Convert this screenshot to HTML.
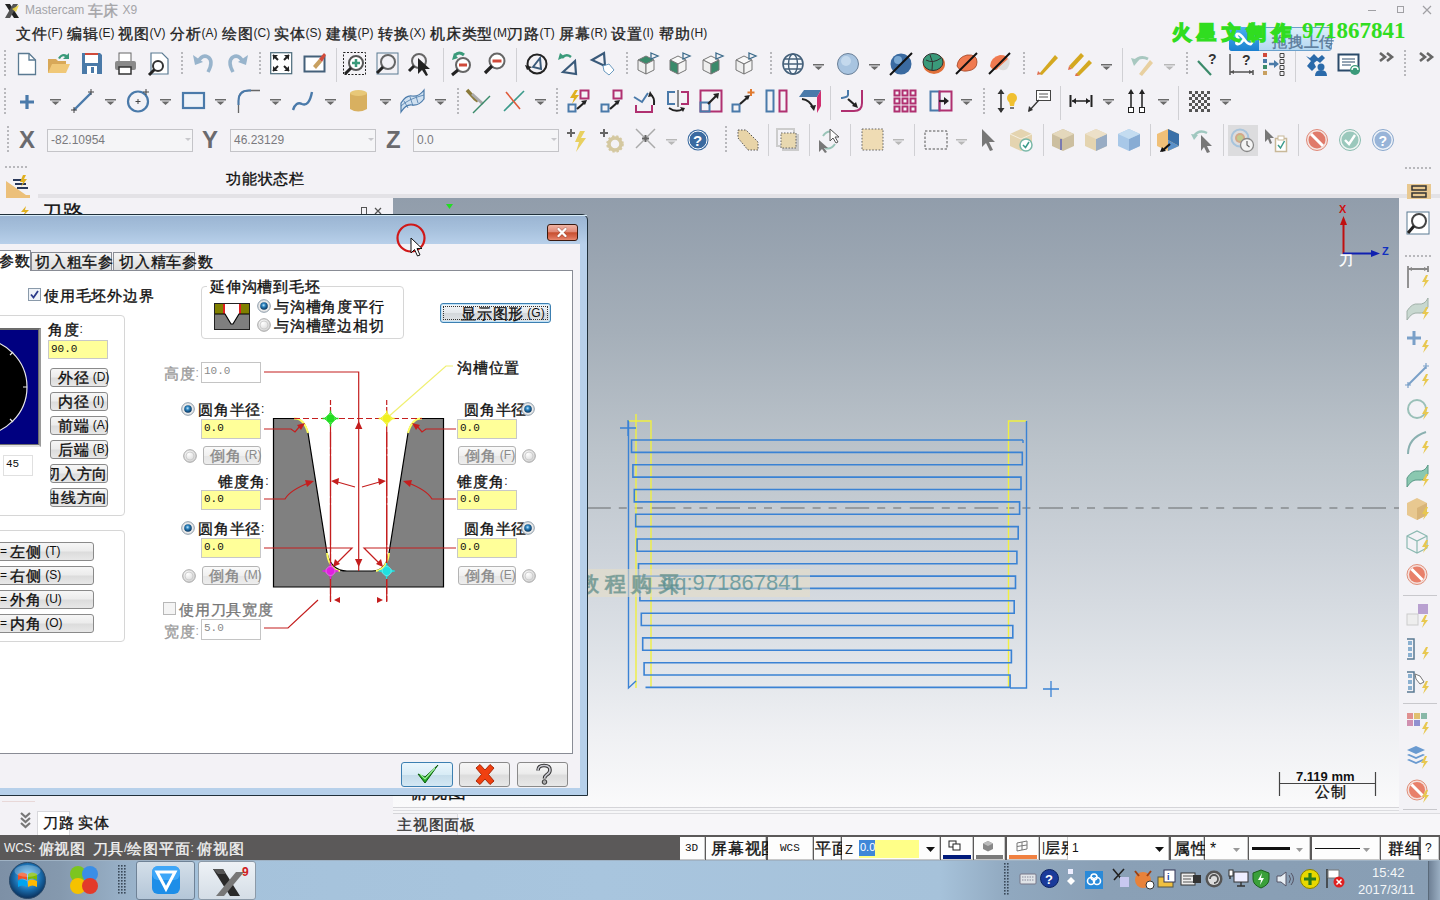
<!DOCTYPE html>
<html><head><meta charset="utf-8">
<style>
*{margin:0;padding:0;box-sizing:border-box}
html,body{width:1440px;height:900px;overflow:hidden;background:#f3f2f6;font-family:"Liberation Sans",sans-serif;font-size:12px;color:#111}
body{position:relative}
.a{position:absolute}
.t{position:absolute;white-space:nowrap;line-height:1}
i.c{font-style:normal;font-family:"Liberation Sans",sans-serif;font-weight:normal;font-size:1.25em;letter-spacing:.05em;line-height:0;-webkit-text-stroke:.35px currentColor;vertical-align:-2px}
svg{position:absolute;overflow:visible}
.btn{position:absolute;border:1px solid #8a8a8a;border-radius:3px;background:linear-gradient(#f6f6f6 0%,#ececec 45%,#dcdcdc 55%,#e8e8e8 100%)}
.inp{position:absolute;border:1px solid #bdbdbd;background:#ffff99}
.rad{position:absolute;width:13px;height:13px;border-radius:50%;border:1px solid #9aa;background:radial-gradient(circle at 50% 45%,#fff 0,#eee 40%,#ccc 100%)}
.radon{background:radial-gradient(circle at 45% 40%,#9fd8ff 0,#2a7fb8 35%,#0d3d66 60%,#ddd 62%,#bbb 100%)}
</style></head><body>
<svg style="left:3px;top:3px;" width="18" height="16" viewBox="0 0 18 16"><path d="M2 1 L7 1 L16 15 L11 15 Z" fill="#222"/><path d="M15 1 L10 1 L2 15 L7 15 Z" fill="#555"/><path d="M9 6 L16 2 L13 9 Z" fill="#e8d040" opacity=".9"/></svg>
<div class="t" style="left:25px;top:4px;font-size:12px;color:#a4a4a8;">Mastercam <i class="c">车床</i> X9</div>
<div class="a" style="left:1368px;top:10px;width:8px;height:1px;background:#a0a0a4"></div>
<div class="a" style="left:1397px;top:6px;width:7px;height:7px;border:1px solid #a0a0a4"></div>
<svg style="left:1422px;top:5px;" width="10" height="10" viewBox="0 0 10 10"><path d="M1 1L9 9M9 1L1 9" stroke="#a0a0a4" stroke-width="1.2"/></svg>
<div class="t" style="left:16px;top:27px;font-size:12px;color:#222;"><i class="c">文件</i>(F)</div>
<div class="t" style="left:67px;top:27px;font-size:12px;color:#222;"><i class="c">编辑</i>(E)</div>
<div class="t" style="left:118px;top:27px;font-size:12px;color:#222;"><i class="c">视图</i>(V)</div>
<div class="t" style="left:170px;top:27px;font-size:12px;color:#222;"><i class="c">分析</i>(A)</div>
<div class="t" style="left:222px;top:27px;font-size:12px;color:#222;"><i class="c">绘图</i>(C)</div>
<div class="t" style="left:274px;top:27px;font-size:12px;color:#222;"><i class="c">实体</i>(S)</div>
<div class="t" style="left:326px;top:27px;font-size:12px;color:#222;"><i class="c">建模</i>(P)</div>
<div class="t" style="left:378px;top:27px;font-size:12px;color:#222;"><i class="c">转换</i>(X)</div>
<div class="t" style="left:430px;top:27px;font-size:12px;color:#222;"><i class="c">机床类型</i>(M)</div>
<div class="t" style="left:508px;top:27px;font-size:12px;color:#222;"><i class="c">刀路</i>(T)</div>
<div class="t" style="left:559px;top:27px;font-size:12px;color:#222;"><i class="c">屏幕</i>(R)</div>
<div class="t" style="left:611px;top:27px;font-size:12px;color:#222;"><i class="c">设置</i>(I)</div>
<div class="t" style="left:659px;top:27px;font-size:12px;color:#222;"><i class="c">帮助</i>(H)</div>
<div class="t" style="left:19px;top:128px;font-size:24px;color:#6a6a6e;font-weight:bold">X</div>
<div class="a" style="left:47px;top:129px;width:146px;height:23px;border:1px solid #c4c4c8;background:#f5f5f7"></div>
<div class="t" style="left:51px;top:134px;font-size:12px;color:#7a7a7e;">-82.10954</div>
<div class="t" style="left:202px;top:128px;font-size:24px;color:#6a6a6e;font-weight:bold">Y</div>
<div class="a" style="left:230px;top:129px;width:146px;height:23px;border:1px solid #c4c4c8;background:#f5f5f7"></div>
<div class="t" style="left:234px;top:134px;font-size:12px;color:#7a7a7e;">46.23129</div>
<div class="t" style="left:386px;top:128px;font-size:24px;color:#6a6a6e;font-weight:bold">Z</div>
<div class="a" style="left:413px;top:129px;width:146px;height:23px;border:1px solid #c4c4c8;background:#f5f5f7"></div>
<div class="t" style="left:417px;top:134px;font-size:12px;color:#7a7a7e;">0.0</div>
<svg style="left:185px;top:138px;" width="6" height="4" viewBox="0 0 6 4"><path d="M0 0H6L3 3Z" fill="#c8c8cc"/></svg>
<svg style="left:368px;top:138px;" width="6" height="4" viewBox="0 0 6 4"><path d="M0 0H6L3 3Z" fill="#c8c8cc"/></svg>
<svg style="left:551px;top:138px;" width="6" height="4" viewBox="0 0 6 4"><path d="M0 0H6L3 3Z" fill="#c8c8cc"/></svg>
<div class="t" style="left:226px;top:172px;font-size:12px;color:#111;"><i class="c">功能状态栏</i></div>
<div class="a" style="left:38px;top:194px;width:1402px;height:4px;background:#e3e2e6"></div>
<div class="t" style="left:42px;top:204px;font-size:16px;color:#111;"><i class="c">刀路</i></div>
<svg style="left:20px;top:206px;" width="10" height="10" viewBox="0 0 10 10"><path d="M6 0L1 6H5L3 10L9 4H5Z" fill="#e0b020"/></svg>
<div class="a" style="left:361px;top:207px;width:6px;height:7px;border:1.5px solid #555;border-bottom:none"></div>
<svg style="left:374px;top:207px;" width="8" height="7" viewBox="0 0 8 7"><path d="M1 1L7 7M7 1L1 7" stroke="#555" stroke-width="1.3"/></svg>
<div class="a" style="left:393px;top:198px;width:1006px;height:609px;background:linear-gradient(#919dab 0%,#a5afb9 22%,#bcc4cb 42%,#ccd2d9 58%,#dfe3e8 75%,#eff0f3 88%,#fafafb 100%)"></div>
<div class="a" style="left:393px;top:807px;width:1006px;height:7px;background:#f6f6f8;border-top:1px solid #d4d4d8;border-bottom:1px solid #d4d4d8"></div>
<div class="a" style="left:393px;top:810px;width:1006px;height:1px;background:#dcdce0"></div>
<div class="a" style="left:1399px;top:198px;width:41px;height:637px;background:#f3f2f6"></div>
<div class="a" style="left:393px;top:814px;width:1047px;height:21px;background:#f3f2f6"></div>
<div class="a" style="left:457px;top:813px;width:983px;height:22px;background:#f7f6f9;border:1px solid #dcdce0;border-bottom:none;border-right:none"></div>
<div class="t" style="left:397px;top:818px;font-size:12px;color:#333;"><i class="c">主视图面板</i></div>
<div class="a" style="left:0px;top:798px;width:393px;height:37px;background:#f3f2f6"></div>
<div class="a" style="left:2px;top:801px;width:33px;height:1px;background:#e8d8d8"></div>
<div class="a" style="left:37px;top:811px;width:33px;height:24px;background:#fff;border:1px solid #d8d8dc;border-bottom:none"></div>
<div class="t" style="left:43px;top:816px;font-size:12px;color:#111;"><i class="c">刀路</i></div>
<div class="t" style="left:78px;top:816px;font-size:12px;color:#111;"><i class="c">实体</i></div>
<svg style="left:20px;top:812px;" width="11" height="20" viewBox="0 0 11 20"><path d="M1 1L5.5 5L10 1M1 6L5.5 10L10 6M1 11L5.5 15L10 11" stroke="#777" stroke-width="2.2" fill="none"/></svg>
<div class="a" style="left:0px;top:835px;width:1440px;height:25px;background:#5b5959"></div>
<div class="t" style="left:4px;top:842px;font-size:12px;color:#f2f2f2;">WCS: <i class="c">俯视图</i> &nbsp;<i class="c">刀具</i>/<i class="c">绘图平面</i>: <i class="c">俯视图</i></div>
<div class="a" style="left:680px;top:837px;width:25px;height:23px;background:#fdfdfd;border-right:1px solid #c8c8c8;border-bottom:1px solid #c8c8c8"></div>
<div class="t" style="left:685px;top:843px;font-size:11px;color:#111;font-family:'Liberation Mono'">3D</div>
<div class="a" style="left:706px;top:837px;width:60px;height:23px;background:#fdfdfd;border-right:1px solid #c8c8c8;border-bottom:1px solid #c8c8c8"></div>
<div class="t" style="left:711px;top:841px;font-size:13px;color:#111;"><i class="c">屏幕视图</i></div>
<div class="a" style="left:768px;top:837px;width:45px;height:23px;background:#fdfdfd;border-right:1px solid #c8c8c8;border-bottom:1px solid #c8c8c8"></div>
<div class="t" style="left:780px;top:843px;font-size:11px;color:#111;font-family:'Liberation Mono'">WCS</div>
<div class="a" style="left:814px;top:837px;width:27px;height:23px;background:#fdfdfd;border-right:1px solid #c8c8c8;border-bottom:1px solid #c8c8c8"></div>
<div class="t" style="left:815px;top:841px;font-size:13px;color:#111;"><i class="c">平面</i></div>
<div class="a" style="left:842px;top:837px;width:98px;height:23px;background:#fdfdfd;border-right:1px solid #c8c8c8;border-bottom:1px solid #c8c8c8"></div>
<div class="t" style="left:845px;top:843px;font-size:13px;color:#222;">Z</div>
<div class="a" style="left:859px;top:840px;width:60px;height:18px;background:#ffff88"></div>
<div class="a" style="left:859px;top:840px;width:16px;height:16px;background:#3f87d8"></div>
<div class="t" style="left:860px;top:842px;font-size:11px;color:#fff;">0.0</div>
<svg style="left:926px;top:847px;" width="9" height="5" viewBox="0 0 9 5"><path d="M0 0H9L4.5 5Z" fill="#111"/></svg>
<div class="a" style="left:941px;top:837px;width:32px;height:23px;background:#fdfdfd;border-right:1px solid #c8c8c8;border-bottom:1px solid #c8c8c8"></div>
<div class="a" style="left:943px;top:855px;width:28px;height:4px;background:#001a7a"></div>
<svg style="left:948px;top:840px;" width="14" height="12" viewBox="0 0 14 12"><rect x="1" y="1" width="7" height="6" fill="none" stroke="#222"/><rect x="5" y="4" width="7" height="6" fill="#fff" stroke="#222"/></svg>
<div class="a" style="left:974px;top:837px;width:31px;height:23px;background:#fdfdfd;border-right:1px solid #c8c8c8;border-bottom:1px solid #c8c8c8"></div>
<div class="a" style="left:976px;top:855px;width:27px;height:4px;background:#7a7a7a"></div>
<svg style="left:982px;top:840px;" width="12" height="12" viewBox="0 0 12 12"><path d="M6 1L11 3.5V9L6 11.5L1 9V3.5Z" fill="#888"/><path d="M6 1L11 3.5L6 6L1 3.5Z" fill="#bbb"/></svg>
<div class="a" style="left:1007px;top:837px;width:32px;height:23px;background:#fdfdfd;border-right:1px solid #c8c8c8;border-bottom:1px solid #c8c8c8"></div>
<div class="a" style="left:1009px;top:855px;width:28px;height:4px;background:#f08040"></div>
<svg style="left:1016px;top:840px;" width="12" height="12" viewBox="0 0 12 12"><path d="M1 3L11 1V9L1 11Z" fill="none" stroke="#777"/><path d="M6 2V10M1 6.5L11 5" stroke="#777"/></svg>
<div class="a" style="left:1040px;top:837px;width:28px;height:23px;background:#fdfdfd;border-right:1px solid #c8c8c8;border-bottom:1px solid #c8c8c8"></div>
<div class="t" style="left:1042px;top:841px;font-size:12px;color:#111;">|<i class="c">层别</i></div>
<div class="a" style="left:1068px;top:837px;width:101px;height:23px;background:#fff;border-right:1px solid #c8c8c8"></div>
<div class="t" style="left:1072px;top:842px;font-size:12px;color:#111;">1</div>
<svg style="left:1155px;top:847px;" width="9" height="5" viewBox="0 0 9 5"><path d="M0 0H9L4.5 5Z" fill="#111"/></svg>
<div class="a" style="left:1171px;top:837px;width:33px;height:23px;background:#fdfdfd;border-right:1px solid #c8c8c8;border-bottom:1px solid #c8c8c8"></div>
<div class="t" style="left:1174px;top:841px;font-size:13px;color:#111;"><i class="c">属性</i></div>
<div class="a" style="left:1205px;top:837px;width:43px;height:23px;background:#fdfdfd;border-right:1px solid #c8c8c8;border-bottom:1px solid #c8c8c8"></div>
<div class="t" style="left:1210px;top:841px;font-size:16px;color:#111;">*</div>
<svg style="left:1233px;top:848px;" width="7" height="4" viewBox="0 0 7 4"><path d="M0 0H7L3.5 4Z" fill="#999"/></svg>
<div class="a" style="left:1249px;top:837px;width:61px;height:23px;background:#fdfdfd;border-right:1px solid #c8c8c8;border-bottom:1px solid #c8c8c8"></div>
<div class="a" style="left:1252px;top:847px;width:38px;height:3px;background:#111"></div>
<svg style="left:1296px;top:848px;" width="7" height="4" viewBox="0 0 7 4"><path d="M0 0H7L3.5 4Z" fill="#999"/></svg>
<div class="a" style="left:1312px;top:837px;width:68px;height:23px;background:#fdfdfd;border-right:1px solid #c8c8c8;border-bottom:1px solid #c8c8c8"></div>
<div class="a" style="left:1315px;top:848px;width:45px;height:1px;background:#111"></div>
<svg style="left:1363px;top:848px;" width="7" height="4" viewBox="0 0 7 4"><path d="M0 0H7L3.5 4Z" fill="#999"/></svg>
<div class="a" style="left:1381px;top:837px;width:38px;height:23px;background:#fdfdfd;border-right:1px solid #c8c8c8;border-bottom:1px solid #c8c8c8"></div>
<div class="t" style="left:1388px;top:841px;font-size:13px;color:#111;"><i class="c">群组</i></div>
<div class="a" style="left:1421px;top:837px;width:18px;height:23px;background:#fdfdfd;border-right:1px solid #c8c8c8;border-bottom:1px solid #c8c8c8"></div>
<div class="t" style="left:1425px;top:842px;font-size:12px;color:#111;">?</div>
<svg style="left:4px;top:50px;" width="2" height="26" viewBox="0 0 2 26"><rect x="0" y="0" width="2" height="2" fill="#b8b8bc"/><rect x="0" y="4" width="2" height="2" fill="#b8b8bc"/><rect x="0" y="8" width="2" height="2" fill="#b8b8bc"/><rect x="0" y="12" width="2" height="2" fill="#b8b8bc"/><rect x="0" y="16" width="2" height="2" fill="#b8b8bc"/><rect x="0" y="20" width="2" height="2" fill="#b8b8bc"/><rect x="0" y="24" width="2" height="2" fill="#b8b8bc"/></svg>
<svg style="left:17px;top:52px;" width="24" height="24" viewBox="0 0 24 24"><path d="M1.5 1.5H12L18.5 8V22.5H1.5Z" fill="#fff" stroke="#5a7a92" stroke-width="1.3"/><path d="M12 1.5V8H18.5" fill="none" stroke="#5a7a92" stroke-width="1.3"/></svg>
<svg style="left:47px;top:52px;" width="24" height="24" viewBox="0 0 24 24"><path d="M1 7H9L11 9H19V21H1Z" fill="#d8a858"/><path d="M1 21L5 12H23L19 21Z" fill="#f0c878"/><path d="M11 6Q15 0 20 3L22 1V7H16L18 5Q15 3 13 7Z" fill="#3a9a7a"/></svg>
<svg style="left:81px;top:52px;" width="24" height="24" viewBox="0 0 24 24"><path d="M1 1H19L21 3V22H1Z" fill="#4a7aa8"/><rect x="4" y="2" width="13" height="9" fill="#fff"/><rect x="4" y="1" width="13" height="2" fill="#d04a3a"/><rect x="6" y="14" width="10" height="8" fill="#fff"/><rect x="10" y="15" width="3" height="6" fill="#4a7aa8"/></svg>
<svg style="left:114px;top:52px;" width="24" height="24" viewBox="0 0 24 24"><rect x="5" y="1" width="12" height="9" fill="#fff" stroke="#666"/><rect x="1" y="9" width="21" height="9" rx="2" fill="#8a8a8a"/><rect x="5" y="15" width="12" height="7" fill="#fff" stroke="#333" stroke-width="1.5"/></svg>
<svg style="left:147px;top:52px;" width="24" height="24" viewBox="0 0 24 24"><path d="M4 1H15L21 7V22H4Z" fill="#fff" stroke="#5a7a92" stroke-width="1.2"/><circle cx="11" cy="14" r="5" fill="none" stroke="#333" stroke-width="2"/><path d="M7.5 17.5L2 23" stroke="#222" stroke-width="3"/></svg>
<svg style="left:181px;top:52px;" width="2" height="24" viewBox="0 0 2 24"><rect x="0" y="0" width="2" height="2" fill="#b8b8bc"/><rect x="0" y="4" width="2" height="2" fill="#b8b8bc"/><rect x="0" y="8" width="2" height="2" fill="#b8b8bc"/><rect x="0" y="12" width="2" height="2" fill="#b8b8bc"/><rect x="0" y="16" width="2" height="2" fill="#b8b8bc"/><rect x="0" y="20" width="2" height="2" fill="#b8b8bc"/></svg>
<svg style="left:192px;top:52px;" width="24" height="24" viewBox="0 0 24 24"><path d="M6 10Q10 2 16 5Q22 9 16 20" fill="none" stroke="#98b4cc" stroke-width="3.5"/><path d="M1 3L3 13L11 10Z" fill="#98b4cc"/></svg>
<svg style="left:225px;top:52px;" width="24" height="24" viewBox="0 0 24 24"><path d="M18 10Q14 2 8 5Q2 9 8 20" fill="none" stroke="#98b4cc" stroke-width="3.5"/><path d="M23 3L21 13L13 10Z" fill="#98b4cc"/></svg>
<svg style="left:259px;top:52px;" width="2" height="24" viewBox="0 0 2 24"><rect x="0" y="0" width="2" height="2" fill="#b8b8bc"/><rect x="0" y="4" width="2" height="2" fill="#b8b8bc"/><rect x="0" y="8" width="2" height="2" fill="#b8b8bc"/><rect x="0" y="12" width="2" height="2" fill="#b8b8bc"/><rect x="0" y="16" width="2" height="2" fill="#b8b8bc"/><rect x="0" y="20" width="2" height="2" fill="#b8b8bc"/></svg>
<svg style="left:270px;top:52px;" width="24" height="24" viewBox="0 0 24 24"><rect x=".7" y=".7" width="21" height="21" fill="#fff" stroke="#4a6a7a" stroke-width="1.2"/><path d="M3 3L8 8M19 3L14 8M3 19L8 14M19 19L14 14" stroke="#222" stroke-width="2"/><path d="M3 3H8L3 8Z M19 3H14L19 8Z M3 19H8L3 14Z M19 19H14L19 14Z" fill="#222"/></svg>
<svg style="left:303px;top:52px;" width="24" height="24" viewBox="0 0 24 24"><rect x="1.5" y="4.5" width="20" height="15" fill="#fff" stroke="#44607a" stroke-width="2"/><path d="M10 14L16 7L19 10L13 17Z" fill="#c8a060"/><path d="M16 7L21 1L23 3L19 10Z" fill="#d04a3a"/></svg>
<div class="a" style="left:336px;top:48px;width:1px;height:34px;background:#d0d0d4"></div>
<svg style="left:343px;top:52px;" width="24" height="24" viewBox="0 0 24 24"><rect x=".5" y=".5" width="22" height="22" fill="none" stroke="#222" stroke-dasharray="2 1.5"/><circle cx="13" cy="11" r="7" fill="#fff" stroke="#555" stroke-width="2"/><path d="M13 7V15M9 11H17" stroke="#3a9a7a" stroke-width="2.5"/><path d="M8 16L2 22" stroke="#222" stroke-width="3"/></svg>
<svg style="left:376px;top:52px;" width="24" height="24" viewBox="0 0 24 24"><rect x="1" y="1" width="21" height="21" fill="none" stroke="#5a7a92"/><circle cx="12" cy="10" r="7" fill="none" stroke="#666" stroke-width="2"/><path d="M7 15L1 21" stroke="#222" stroke-width="3"/></svg>
<svg style="left:408px;top:52px;" width="24" height="24" viewBox="0 0 24 24"><circle cx="11" cy="9" r="7" fill="none" stroke="#666" stroke-width="2"/><path d="M6 14L1 19" stroke="#222" stroke-width="3"/><path d="M10 6L10 22L14 18L18 24L20 23L17 17H22Z" fill="#222"/></svg>
<div class="a" style="left:443px;top:48px;width:1px;height:34px;background:#d0d0d4"></div>
<svg style="left:450px;top:52px;" width="24" height="24" viewBox="0 0 24 24"><path d="M5 3Q9 -1 14 3" stroke="#3a9a7a" stroke-width="3" fill="none"/><path d="M2 8L4 1L8 6Z" fill="#3a9a7a"/><circle cx="13" cy="13" r="7" fill="#fff" stroke="#666" stroke-width="2"/><path d="M9 13H17" stroke="#d04a3a" stroke-width="3"/><path d="M8 18L2 23" stroke="#222" stroke-width="3"/></svg>
<svg style="left:483px;top:52px;" width="24" height="24" viewBox="0 0 24 24"><circle cx="14" cy="9" r="7.5" fill="#fff" stroke="#666" stroke-width="2"/><path d="M9.5 9H18.5" stroke="#d04a3a" stroke-width="3"/><path d="M9 14L2 21" stroke="#222" stroke-width="3.2"/></svg>
<div class="a" style="left:516px;top:48px;width:1px;height:34px;background:#d0d0d4"></div>
<svg style="left:525px;top:52px;" width="24" height="24" viewBox="0 0 24 24"><circle cx="12" cy="12" r="9.5" fill="none" stroke="#222" stroke-width="2"/><path d="M2 18L0 13L7 15Z" fill="#222"/><path d="M8 15L15 6L16 17Z" fill="none" stroke="#3a5a7a" stroke-width="2"/></svg>
<svg style="left:557px;top:52px;" width="24" height="24" viewBox="0 0 24 24"><path d="M5 6Q9 1 14 5" stroke="#3a9a7a" stroke-width="2.5" fill="none"/><path d="M1 8L3 1L8 5Z" fill="#3a9a7a"/><path d="M6 20L18 9L19 22Z" fill="none" stroke="#3a5a7a" stroke-width="2.2"/></svg>
<svg style="left:590px;top:52px;" width="24" height="24" viewBox="0 0 24 24"><path d="M2 8L14 1L15 14Z" fill="none" stroke="#3a5a7a" stroke-width="2.2"/><path d="M13 14L19 12L24 18L19 23L14 19Z" fill="#fff" stroke="#6a9ac0"/></svg>
<svg style="left:626px;top:52px;" width="2" height="24" viewBox="0 0 2 24"><rect x="0" y="0" width="2" height="2" fill="#b8b8bc"/><rect x="0" y="4" width="2" height="2" fill="#b8b8bc"/><rect x="0" y="8" width="2" height="2" fill="#b8b8bc"/><rect x="0" y="12" width="2" height="2" fill="#b8b8bc"/><rect x="0" y="16" width="2" height="2" fill="#b8b8bc"/><rect x="0" y="20" width="2" height="2" fill="#b8b8bc"/></svg>
<svg style="left:636px;top:52px;" width="24" height="24" viewBox="0 0 24 24"><path d="M2 8L10 4L18 8L10 12Z" fill="#3a8a6a" stroke="#777"/><path d="M2 8V18L10 22V12Z" fill="#eee" stroke="#777"/><path d="M18 8V18L10 22V12Z" fill="#f4f4f4" stroke="#777"/><path d="M15 1L22 4L15 7Z" fill="none" stroke="#3a6a8a" stroke-width="1.3"/></svg>
<svg style="left:668px;top:52px;" width="24" height="24" viewBox="0 0 24 24"><path d="M2 8L10 4L18 8L10 12Z" fill="#f8f8f8" stroke="#777"/><path d="M2 8V18L10 22V12Z" fill="#3a8a6a" stroke="#777"/><path d="M18 8V18L10 22V12Z" fill="#f4f4f4" stroke="#777"/><path d="M15 1L22 4L15 7Z" fill="none" stroke="#3a6a8a" stroke-width="1.3"/></svg>
<svg style="left:701px;top:52px;" width="24" height="24" viewBox="0 0 24 24"><path d="M2 8L10 4L18 8L10 12Z" fill="#f8f8f8" stroke="#777"/><path d="M2 8V18L10 22V12Z" fill="#eee" stroke="#777"/><path d="M18 8V18L10 22V12Z" fill="#3a8a6a" stroke="#777"/><path d="M15 1L22 4L15 7Z" fill="none" stroke="#3a6a8a" stroke-width="1.3"/></svg>
<svg style="left:734px;top:52px;" width="24" height="24" viewBox="0 0 24 24"><path d="M2 8L10 4L18 8L10 12Z" fill="#f8f8f8" stroke="#777"/><path d="M2 8V18L10 22V12Z" fill="#eee" stroke="#777"/><path d="M18 8V18L10 22V12Z" fill="#f4f4f4" stroke="#777"/><path d="M15 1L22 4L15 7Z" fill="none" stroke="#3a6a8a" stroke-width="1.3"/></svg>
<svg style="left:770px;top:52px;" width="2" height="24" viewBox="0 0 2 24"><rect x="0" y="0" width="2" height="2" fill="#b8b8bc"/><rect x="0" y="4" width="2" height="2" fill="#b8b8bc"/><rect x="0" y="8" width="2" height="2" fill="#b8b8bc"/><rect x="0" y="12" width="2" height="2" fill="#b8b8bc"/><rect x="0" y="16" width="2" height="2" fill="#b8b8bc"/><rect x="0" y="20" width="2" height="2" fill="#b8b8bc"/></svg>
<svg style="left:782px;top:52px;" width="24" height="24" viewBox="0 0 24 24"><circle cx="11" cy="12" r="10" fill="#f4f8fc" stroke="#44607a" stroke-width="1.6"/><ellipse cx="11" cy="12" rx="4.5" ry="10" fill="none" stroke="#44607a" stroke-width="1.4"/><path d="M1 12H21M3 7H19M3 17H19" stroke="#44607a" stroke-width="1.3"/></svg>
<svg style="left:813px;top:64px;" width="11" height="6" viewBox="0 0 11 6"><path d="M0 0H11V1.5H0Z M1.5 2.5H9.5L5.5 6Z" fill="#6a6a6a"/></svg>
<svg style="left:837px;top:52px;" width="24" height="24" viewBox="0 0 24 24"><circle cx="11" cy="12" r="10.5" fill="#a8c4e0" stroke="#6a8098"/><circle cx="9" cy="9" r="5" fill="#d0e2f2" opacity=".7"/></svg>
<svg style="left:869px;top:64px;" width="11" height="6" viewBox="0 0 11 6"><path d="M0 0H11V1.5H0Z M1.5 2.5H9.5L5.5 6Z" fill="#6a6a6a"/></svg>
<svg style="left:889px;top:52px;" width="24" height="24" viewBox="0 0 24 24"><circle cx="12" cy="12" r="10.5" fill="#3a6aa0"/><circle cx="9" cy="8" r="4" fill="#8ab8e0" opacity=".8"/><path d="M1 23L23 1" stroke="#111" stroke-width="2"/></svg>
<svg style="left:922px;top:52px;" width="24" height="24" viewBox="0 0 24 24"><ellipse cx="12" cy="12" rx="11" ry="10" fill="#e0703a"/><ellipse cx="11" cy="10" rx="10" ry="8.5" fill="#3a9a7a" stroke="#333"/><path d="M4 8Q11 12 19 6M8 3Q12 10 10 18" stroke="#333" fill="none"/></svg>
<svg style="left:955px;top:52px;" width="24" height="24" viewBox="0 0 24 24"><path d="M2 14Q3 5 12 3Q22 2 22 10Q22 18 12 19Q5 20 2 14Z" fill="#f07a50" stroke="#a04020" stroke-width=".8"/><path d="M1 22L22 1" stroke="#111" stroke-width="2"/></svg>
<svg style="left:988px;top:52px;" width="24" height="24" viewBox="0 0 24 24"><path d="M2 14Q3 5 12 3Q20 3 20 8L8 18Q4 18 2 14Z" fill="#f07a50"/><path d="M10 16L21 6Q23 12 19 17Q14 20 10 16Z" fill="#ddd"/><path d="M1 22L22 1" stroke="#111" stroke-width="2"/></svg>
<svg style="left:1023px;top:52px;" width="2" height="24" viewBox="0 0 2 24"><rect x="0" y="0" width="2" height="2" fill="#b8b8bc"/><rect x="0" y="4" width="2" height="2" fill="#b8b8bc"/><rect x="0" y="8" width="2" height="2" fill="#b8b8bc"/><rect x="0" y="12" width="2" height="2" fill="#b8b8bc"/><rect x="0" y="16" width="2" height="2" fill="#b8b8bc"/><rect x="0" y="20" width="2" height="2" fill="#b8b8bc"/></svg>
<svg style="left:1035px;top:52px;" width="24" height="24" viewBox="0 0 24 24"><path d="M4 22L20 3L23 6L7 23Z" fill="#d4a820"/><path d="M3 19L6 22L2 23Z" fill="#e07050"/></svg>
<svg style="left:1068px;top:52px;" width="24" height="24" viewBox="0 0 24 24"><path d="M1 14L13 1L16 4L4 17Z" fill="#d4a820"/><path d="M1 14L4 17L0 18Z" fill="#e07050"/><path d="M8 22L21 8L24 11L11 24Z" fill="#d4a820"/><path d="M8 21L11 24L7 24Z" fill="#e07050"/></svg>
<svg style="left:1101px;top:64px;" width="11" height="6" viewBox="0 0 11 6"><path d="M0 0H11V1.5H0Z M1.5 2.5H9.5L5.5 6Z" fill="#6a6a6a"/></svg>
<div class="a" style="left:1122px;top:48px;width:1px;height:34px;background:#d0d0d4"></div>
<svg style="left:1130px;top:52px;" width="24" height="24" viewBox="0 0 24 24"><path d="M4 10Q10 3 18 7" stroke="#a8c8c0" stroke-width="3" fill="none"/><path d="M1 6L4 14L9 8Z" fill="#a8c8c0"/><path d="M9 22L20 8L23 11L12 24Z" fill="#e8d0a0"/></svg>
<svg style="left:1164px;top:64px;" width="11" height="6" viewBox="0 0 11 6"><path d="M0 0H11V1.5H0Z M1.5 2.5H9.5L5.5 6Z" fill="#b8b8b8"/></svg>
<svg style="left:1186px;top:52px;" width="2" height="24" viewBox="0 0 2 24"><rect x="0" y="0" width="2" height="2" fill="#b8b8bc"/><rect x="0" y="4" width="2" height="2" fill="#b8b8bc"/><rect x="0" y="8" width="2" height="2" fill="#b8b8bc"/><rect x="0" y="12" width="2" height="2" fill="#b8b8bc"/><rect x="0" y="16" width="2" height="2" fill="#b8b8bc"/><rect x="0" y="20" width="2" height="2" fill="#b8b8bc"/></svg>
<svg style="left:1196px;top:52px;" width="24" height="24" viewBox="0 0 24 24"><path d="M2 9L15 23" stroke="#3a8a6a" stroke-width="2.2"/><text x="12" y="12" font-size="14" font-weight="bold" fill="#333" font-family="Liberation Sans">?</text></svg>
<svg style="left:1229px;top:52px;" width="24" height="24" viewBox="0 0 24 24"><path d="M1 2V23M24 18V23M1 20H24" stroke="#555" stroke-width="1.5"/><path d="M1 20L5 18V22Z M24 20L20 18V22Z" fill="#555"/><text x="13" y="13" font-size="14" font-weight="bold" fill="#333" font-family="Liberation Sans">?</text></svg>
<svg style="left:1262px;top:52px;" width="24" height="24" viewBox="0 0 24 24"><rect x="1" y="1" width="4" height="4" fill="#d04a3a"/><rect x="1" y="7" width="4" height="4" fill="#4a7aa8"/><rect x="1" y="13" width="4" height="4" fill="#3a8a6a"/><rect x="1" y="19" width="4" height="4" fill="#c8a060"/><path d="M7 12H14" stroke="#4a7aa8" stroke-width="2.5"/><path d="M17 12L12 8V16Z" fill="#4a7aa8"/><path d="M18 1.5h4v4h-4zM18 7.5h4v4h-4zM18 13.5h4v4h-4zM18 19.5h4v4h-4z" fill="none" stroke="#444"/></svg>
<div class="a" style="left:1295px;top:48px;width:1px;height:34px;background:#d0d0d4"></div>
<svg style="left:1303px;top:52px;" width="24" height="24" viewBox="0 0 24 24"><path d="M3 4L8 9L4 14L9 19L13 15L11 11L16 7L11 2L7 6Z" fill="#2a6aaa"/><path d="M13 8L19 3L22 6L17 11Z" fill="#2a6aaa"/><circle cx="18" cy="15" r="3.5" fill="#2a6aaa"/><path d="M12 24Q12 18 18 18Q24 18 24 24Z" fill="#2a6aaa"/></svg>
<svg style="left:1337px;top:52px;" width="24" height="24" viewBox="0 0 24 24"><rect x="1.5" y="2.5" width="20" height="16" fill="#fff" stroke="#2a4a6a" stroke-width="2"/><path d="M5 7H18M5 10H18M5 13H14" stroke="#2a4a6a"/><circle cx="18" cy="18" r="5" fill="#3a9a7a"/><path d="M15 18A3 3 0 0 1 21 18" stroke="#fff" stroke-width="1.3" fill="none"/></svg>
<svg style="left:1379px;top:52px;" width="16" height="12" viewBox="0 0 16 12"><path d="M1 1L6 5L1 9M8 1L13 5L8 9" stroke="#666" stroke-width="2.6" fill="none"/></svg>
<svg style="left:1404px;top:50px;" width="2" height="26" viewBox="0 0 2 26"><rect x="0" y="0" width="2" height="2" fill="#b8b8bc"/><rect x="0" y="4" width="2" height="2" fill="#b8b8bc"/><rect x="0" y="8" width="2" height="2" fill="#b8b8bc"/><rect x="0" y="12" width="2" height="2" fill="#b8b8bc"/><rect x="0" y="16" width="2" height="2" fill="#b8b8bc"/><rect x="0" y="20" width="2" height="2" fill="#b8b8bc"/><rect x="0" y="24" width="2" height="2" fill="#b8b8bc"/></svg>
<svg style="left:1419px;top:52px;" width="16" height="12" viewBox="0 0 16 12"><path d="M1 1L6 5L1 9M8 1L13 5L8 9" stroke="#666" stroke-width="2.6" fill="none"/></svg>
<svg style="left:4px;top:88px;" width="2" height="26" viewBox="0 0 2 26"><rect x="0" y="0" width="2" height="2" fill="#b8b8bc"/><rect x="0" y="4" width="2" height="2" fill="#b8b8bc"/><rect x="0" y="8" width="2" height="2" fill="#b8b8bc"/><rect x="0" y="12" width="2" height="2" fill="#b8b8bc"/><rect x="0" y="16" width="2" height="2" fill="#b8b8bc"/><rect x="0" y="20" width="2" height="2" fill="#b8b8bc"/><rect x="0" y="24" width="2" height="2" fill="#b8b8bc"/></svg>
<svg style="left:19px;top:89px;" width="24" height="24" viewBox="0 0 24 24"><path d="M8 6V20M1 13H15" stroke="#4a7aaa" stroke-width="3.2"/></svg>
<svg style="left:50px;top:99px;" width="11" height="6" viewBox="0 0 11 6"><path d="M0 0H11V1.5H0Z M1.5 2.5H9.5L5.5 6Z" fill="#6a6a6a"/></svg>
<svg style="left:71px;top:89px;" width="24" height="24" viewBox="0 0 24 24"><path d="M3 21L20 4" stroke="#4a7aaa" stroke-width="2.4"/><path d="M20 0V6M17 3H23M3 18V24M0 21H6" stroke="#444" stroke-width="1"/></svg>
<svg style="left:105px;top:99px;" width="11" height="6" viewBox="0 0 11 6"><path d="M0 0H11V1.5H0Z M1.5 2.5H9.5L5.5 6Z" fill="#6a6a6a"/></svg>
<svg style="left:126px;top:89px;" width="24" height="24" viewBox="0 0 24 24"><circle cx="12" cy="12.5" r="10" fill="none" stroke="#4a7aaa" stroke-width="2.2"/><path d="M12 10V15M9.5 12.5H14.5M20 0V6M17 3H23" stroke="#444" stroke-width="1"/></svg>
<svg style="left:160px;top:99px;" width="11" height="6" viewBox="0 0 11 6"><path d="M0 0H11V1.5H0Z M1.5 2.5H9.5L5.5 6Z" fill="#6a6a6a"/></svg>
<svg style="left:182px;top:89px;" width="24" height="24" viewBox="0 0 24 24"><rect x="1" y="4" width="21" height="15" fill="#eef2f8" stroke="#4a7aaa" stroke-width="2.2"/></svg>
<svg style="left:215px;top:99px;" width="11" height="6" viewBox="0 0 11 6"><path d="M0 0H11V1.5H0Z M1.5 2.5H9.5L5.5 6Z" fill="#6a6a6a"/></svg>
<svg style="left:237px;top:89px;" width="24" height="24" viewBox="0 0 24 24"><path d="M1.5 24V12Q1.5 1.5 12 1.5H23" fill="none" stroke="#666" stroke-width="1.3"/><path d="M1.5 16V12Q1.5 1.5 12 1.5H14" fill="none" stroke="#4a7aaa" stroke-width="2"/></svg>
<svg style="left:270px;top:99px;" width="11" height="6" viewBox="0 0 11 6"><path d="M0 0H11V1.5H0Z M1.5 2.5H9.5L5.5 6Z" fill="#6a6a6a"/></svg>
<svg style="left:292px;top:89px;" width="24" height="24" viewBox="0 0 24 24"><path d="M1 21Q4 12 10 15Q17 18 20 3" fill="none" stroke="#4a7aaa" stroke-width="2.4"/></svg>
<svg style="left:325px;top:99px;" width="11" height="6" viewBox="0 0 11 6"><path d="M0 0H11V1.5H0Z M1.5 2.5H9.5L5.5 6Z" fill="#6a6a6a"/></svg>
<svg style="left:349px;top:89px;" width="24" height="24" viewBox="0 0 24 24"><path d="M1 4V20Q9 25 18 20V4Z" fill="#d8b060"/><ellipse cx="9.5" cy="4" rx="8.5" ry="3" fill="#e8c878"/></svg>
<svg style="left:380px;top:99px;" width="11" height="6" viewBox="0 0 11 6"><path d="M0 0H11V1.5H0Z M1.5 2.5H9.5L5.5 6Z" fill="#6a6a6a"/></svg>
<svg style="left:400px;top:89px;" width="24" height="24" viewBox="0 0 24 24"><path d="M1 14Q6 6 12 7Q19 8 24 1V10Q19 17 12 16Q6 15 1 23Z" fill="#cfe0f0" stroke="#4a7aaa" stroke-width="1.2"/><path d="M4 12L8 19M10 8L13 17M16 7L18 14M1 17Q8 10 24 6" stroke="#4a7aaa" stroke-width=".8" fill="none"/></svg>
<svg style="left:435px;top:99px;" width="11" height="6" viewBox="0 0 11 6"><path d="M0 0H11V1.5H0Z M1.5 2.5H9.5L5.5 6Z" fill="#6a6a6a"/></svg>
<svg style="left:457px;top:88px;" width="2" height="26" viewBox="0 0 2 26"><rect x="0" y="0" width="2" height="2" fill="#b8b8bc"/><rect x="0" y="4" width="2" height="2" fill="#b8b8bc"/><rect x="0" y="8" width="2" height="2" fill="#b8b8bc"/><rect x="0" y="12" width="2" height="2" fill="#b8b8bc"/><rect x="0" y="16" width="2" height="2" fill="#b8b8bc"/><rect x="0" y="20" width="2" height="2" fill="#b8b8bc"/><rect x="0" y="24" width="2" height="2" fill="#b8b8bc"/></svg>
<svg style="left:466px;top:89px;" width="24" height="24" viewBox="0 0 24 24"><path d="M1 1L9 10L12 12" stroke="#8a7a3a" stroke-width="3.5"/><path d="M6 5L17 15" stroke="#aaa" stroke-width="3"/><path d="M7 24L24 7" stroke="#3a8a6a" stroke-width="1.5"/></svg>
<svg style="left:502px;top:89px;" width="24" height="24" viewBox="0 0 24 24"><path d="M2 22L22 2" stroke="#3a9a8a" stroke-width="1.6"/><path d="M4 3L18 20" stroke="#e05a3a" stroke-width="1.6"/></svg>
<svg style="left:535px;top:99px;" width="11" height="6" viewBox="0 0 11 6"><path d="M0 0H11V1.5H0Z M1.5 2.5H9.5L5.5 6Z" fill="#6a6a6a"/></svg>
<svg style="left:556px;top:88px;" width="2" height="26" viewBox="0 0 2 26"><rect x="0" y="0" width="2" height="2" fill="#b8b8bc"/><rect x="0" y="4" width="2" height="2" fill="#b8b8bc"/><rect x="0" y="8" width="2" height="2" fill="#b8b8bc"/><rect x="0" y="12" width="2" height="2" fill="#b8b8bc"/><rect x="0" y="16" width="2" height="2" fill="#b8b8bc"/><rect x="0" y="20" width="2" height="2" fill="#b8b8bc"/><rect x="0" y="24" width="2" height="2" fill="#b8b8bc"/></svg>
<svg style="left:567px;top:89px;" width="24" height="24" viewBox="0 0 24 24"><path d="M3 9L8 1H11L8 6H12L5 15L7 9Z" fill="#e0b020"/><rect x="13.5" y="1.5" width="8" height="8" fill="none" stroke="#b03070" stroke-width="2"/><rect x="1.5" y="15.5" width="7" height="7" fill="none" stroke="#4a7aaa" stroke-width="2"/><path d="M10 20L18 13" stroke="#222" stroke-width="2.2"/><path d="M20 11L14 12L18 16Z" fill="#222"/></svg>
<svg style="left:600px;top:89px;" width="24" height="24" viewBox="0 0 24 24"><rect x="13.5" y="1.5" width="8" height="8" fill="none" stroke="#b03070" stroke-width="2"/><rect x="1.5" y="15.5" width="7" height="7" fill="none" stroke="#4a7aaa" stroke-width="2"/><path d="M10 20L18 13" stroke="#222" stroke-width="2.2"/><path d="M20 11L14 12L18 16Z" fill="#222"/></svg>
<svg style="left:633px;top:89px;" width="24" height="24" viewBox="0 0 24 24"><path d="M1 8L9 13L15 4" fill="none" stroke="#4a7aaa" stroke-width="2"/><path d="M3 16V23H19V16" fill="none" stroke="#b03070" stroke-width="2"/><path d="M17 5Q22 8 21 16" stroke="#222" stroke-width="2" fill="none"/><path d="M17 2L15 8L20 7Z" fill="#222"/></svg>
<svg style="left:666px;top:89px;" width="24" height="24" viewBox="0 0 24 24"><path d="M9 3H2V15H9M15 3H22V15H15" fill="none" stroke="#4a7aaa" stroke-width="2"/><path d="M15 3H22V15H15" fill="none" stroke="#b03070" stroke-width="2"/><path d="M12 1V18" stroke="#222"/><path d="M3 19Q10 24 17 20" stroke="#222" stroke-width="2" fill="none"/><path d="M19 19L14 18L17 23Z" fill="#222"/></svg>
<svg style="left:699px;top:89px;" width="24" height="24" viewBox="0 0 24 24"><rect x="1.5" y="1.5" width="21" height="21" fill="none" stroke="#b03070" stroke-width="2"/><rect x="1.5" y="13.5" width="9" height="9" fill="none" stroke="#4a7aaa" stroke-width="2"/><path d="M9 15L18 6" stroke="#222" stroke-width="2.2"/><path d="M20 4L14 5L19 10Z" fill="#222"/></svg>
<svg style="left:731px;top:89px;" width="24" height="24" viewBox="0 0 24 24"><rect x="1.5" y="15.5" width="7" height="7" fill="none" stroke="#4a7aaa" stroke-width="2"/><path d="M9 15L17 8" stroke="#222" stroke-width="2.2"/><path d="M19 6L13 7L17 11Z" fill="#222"/><path d="M20 0V7M16.5 3.5H23.5" stroke="#e07a30" stroke-width="2"/></svg>
<svg style="left:765px;top:89px;" width="24" height="24" viewBox="0 0 24 24"><rect x="1.5" y="1.5" width="7" height="21" fill="none" stroke="#4a7aaa" stroke-width="2"/><rect x="14.5" y="1.5" width="7" height="21" fill="none" stroke="#b03070" stroke-width="2"/></svg>
<svg style="left:798px;top:89px;" width="24" height="24" viewBox="0 0 24 24"><path d="M1 8L6 1H23L19 8Z" fill="#4a7aaa"/><path d="M19 8L23 1V17L19 24Z" fill="#d03070"/><path d="M4 10Q12 11 15 19" stroke="#222" stroke-width="2" fill="none"/><path d="M16 22L12 17L18 16Z" fill="#222"/></svg>
<div class="a" style="left:830px;top:86px;width:1px;height:34px;background:#d0d0d4"></div>
<svg style="left:840px;top:89px;" width="24" height="24" viewBox="0 0 24 24"><path d="M8 1V6Q8 8 2 9H1" fill="none" stroke="#4a7aaa" stroke-width="2"/><path d="M1 22H14Q22 22 22 14V1" fill="none" stroke="#b03070" stroke-width="2"/><path d="M8 10L16 17" stroke="#222" stroke-width="2.2"/><path d="M18 19L12 17L16 13Z" fill="#222"/></svg>
<svg style="left:874px;top:99px;" width="11" height="6" viewBox="0 0 11 6"><path d="M0 0H11V1.5H0Z M1.5 2.5H9.5L5.5 6Z" fill="#6a6a6a"/></svg>
<svg style="left:893px;top:89px;" width="24" height="24" viewBox="0 0 24 24"><path d="M1.5 1.5h5v5h-5zM9.5 1.5h5v5h-5zM17.5 1.5h5v5h-5zM1.5 9.5h5v5h-5zM9.5 9.5h5v5h-5zM17.5 9.5h5v5h-5zM1.5 17.5h5v5h-5zM9.5 17.5h5v5h-5zM17.5 17.5h5v5h-5z" fill="none" stroke="#b03070" stroke-width="2"/></svg>
<svg style="left:929px;top:89px;" width="24" height="24" viewBox="0 0 24 24"><rect x="1.5" y="2.5" width="9" height="19" fill="none" stroke="#4a7aaa" stroke-width="2"/><rect x="10.5" y="2.5" width="12" height="19" fill="none" stroke="#b03070" stroke-width="2"/><path d="M10 12H17" stroke="#222" stroke-width="2.2"/><path d="M20 12L15 8V16Z" fill="#222"/></svg>
<svg style="left:961px;top:99px;" width="11" height="6" viewBox="0 0 11 6"><path d="M0 0H11V1.5H0Z M1.5 2.5H9.5L5.5 6Z" fill="#6a6a6a"/></svg>
<svg style="left:983px;top:88px;" width="2" height="26" viewBox="0 0 2 26"><rect x="0" y="0" width="2" height="2" fill="#b8b8bc"/><rect x="0" y="4" width="2" height="2" fill="#b8b8bc"/><rect x="0" y="8" width="2" height="2" fill="#b8b8bc"/><rect x="0" y="12" width="2" height="2" fill="#b8b8bc"/><rect x="0" y="16" width="2" height="2" fill="#b8b8bc"/><rect x="0" y="20" width="2" height="2" fill="#b8b8bc"/><rect x="0" y="24" width="2" height="2" fill="#b8b8bc"/></svg>
<svg style="left:995px;top:89px;" width="24" height="24" viewBox="0 0 24 24"><path d="M6 1V23" stroke="#333" stroke-width="1.5"/><path d="M6 0L2.5 5H9.5Z M6 24L2.5 19H9.5Z" fill="#333"/><circle cx="17" cy="9" r="5" fill="#f0c030"/><path d="M14 12L15 17H19L20 12Z" fill="#f0c030"/><rect x="15" y="18" width="4" height="2" fill="#777"/></svg>
<svg style="left:1027px;top:89px;" width="24" height="24" viewBox="0 0 24 24"><rect x="9.5" y="1.5" width="14" height="10" fill="#fff" stroke="#444"/><path d="M12 5H21M12 8H21" stroke="#555"/><path d="M12 11L2 22" stroke="#333" stroke-width="1.3"/><path d="M1 23L2 17L6 21Z" fill="#333"/></svg>
<div class="a" style="left:1060px;top:86px;width:1px;height:34px;background:#d0d0d4"></div>
<svg style="left:1069px;top:89px;" width="24" height="24" viewBox="0 0 24 24"><path d="M1.5 6V18M22.5 6V18" stroke="#222" stroke-width="2"/><path d="M3 12H21" stroke="#222" stroke-width="1.5"/><path d="M3 12L7 9V15Z M21 12L17 9V15Z" fill="#222"/></svg>
<svg style="left:1103px;top:99px;" width="11" height="6" viewBox="0 0 11 6"><path d="M0 0H11V1.5H0Z M1.5 2.5H9.5L5.5 6Z" fill="#6a6a6a"/></svg>
<svg style="left:1127px;top:89px;" width="20" height="24" viewBox="0 0 20 24"><path d="M4 2V18M15 2V18" stroke="#222" stroke-width="1.5"/><path d="M4 0L1 5H7Z M15 0L12 5H18Z" fill="#222"/><rect x="1.5" y="18.5" width="5" height="5" fill="#fff" stroke="#222"/><rect x="12.5" y="18.5" width="5" height="5" fill="#fff" stroke="#222"/></svg>
<svg style="left:1158px;top:99px;" width="11" height="6" viewBox="0 0 11 6"><path d="M0 0H11V1.5H0Z M1.5 2.5H9.5L5.5 6Z" fill="#6a6a6a"/></svg>
<div class="a" style="left:1178px;top:86px;width:1px;height:34px;background:#d0d0d4"></div>
<svg style="left:1189px;top:91px;" width="21" height="21" viewBox="0 0 21 21"><rect x="0" y="0" width="3" height="3" fill="#555"/><rect x="0" y="6" width="3" height="3" fill="#555"/><rect x="0" y="12" width="3" height="3" fill="#555"/><rect x="0" y="18" width="3" height="3" fill="#555"/><rect x="3" y="3" width="3" height="3" fill="#555"/><rect x="3" y="9" width="3" height="3" fill="#555"/><rect x="3" y="15" width="3" height="3" fill="#555"/><rect x="6" y="0" width="3" height="3" fill="#555"/><rect x="6" y="6" width="3" height="3" fill="#555"/><rect x="6" y="12" width="3" height="3" fill="#555"/><rect x="6" y="18" width="3" height="3" fill="#555"/><rect x="9" y="3" width="3" height="3" fill="#555"/><rect x="9" y="9" width="3" height="3" fill="#555"/><rect x="9" y="15" width="3" height="3" fill="#555"/><rect x="12" y="0" width="3" height="3" fill="#555"/><rect x="12" y="6" width="3" height="3" fill="#555"/><rect x="12" y="12" width="3" height="3" fill="#555"/><rect x="12" y="18" width="3" height="3" fill="#555"/><rect x="15" y="3" width="3" height="3" fill="#555"/><rect x="15" y="9" width="3" height="3" fill="#555"/><rect x="15" y="15" width="3" height="3" fill="#555"/><rect x="18" y="0" width="3" height="3" fill="#555"/><rect x="18" y="6" width="3" height="3" fill="#555"/><rect x="18" y="12" width="3" height="3" fill="#555"/><rect x="18" y="18" width="3" height="3" fill="#555"/></svg>
<svg style="left:1220px;top:99px;" width="11" height="6" viewBox="0 0 11 6"><path d="M0 0H11V1.5H0Z M1.5 2.5H9.5L5.5 6Z" fill="#6a6a6a"/></svg>
<svg style="left:7px;top:126px;" width="2" height="28" viewBox="0 0 2 28"><rect x="0" y="0" width="2" height="2" fill="#b8b8bc"/><rect x="0" y="4" width="2" height="2" fill="#b8b8bc"/><rect x="0" y="8" width="2" height="2" fill="#b8b8bc"/><rect x="0" y="12" width="2" height="2" fill="#b8b8bc"/><rect x="0" y="16" width="2" height="2" fill="#b8b8bc"/><rect x="0" y="20" width="2" height="2" fill="#b8b8bc"/><rect x="0" y="24" width="2" height="2" fill="#b8b8bc"/></svg>
<svg style="left:567px;top:128px;" width="24" height="24" viewBox="0 0 24 24"><path d="M4 1V9M0 5H8" stroke="#666" stroke-width="2"/><path d="M13 3L8 14H12L9 24L19 10H14L18 3Z" fill="#e8d060"/></svg>
<svg style="left:600px;top:128px;" width="24" height="24" viewBox="0 0 24 24"><path d="M4 1V9M0 5H8" stroke="#666" stroke-width="2"/><circle cx="15" cy="16" r="6" fill="none" stroke="#d4c8a0" stroke-width="3.5"/><circle cx="15" cy="16" r="7.8" fill="none" stroke="#d4c8a0" stroke-width="2" stroke-dasharray="2.2 2"/></svg>
<svg style="left:635px;top:128px;" width="24" height="24" viewBox="0 0 24 24"><path d="M1 1L20 20M20 1L1 20" stroke="#aaa" stroke-width="1.5"/><path d="M10.5 7V14M7 10.5H14" stroke="#666" stroke-width="2"/></svg>
<svg style="left:666px;top:139px;" width="11" height="6" viewBox="0 0 11 6"><path d="M0 0H11V1.5H0Z M1.5 2.5H9.5L5.5 6Z" fill="#b8b8b8"/></svg>
<svg style="left:687px;top:128px;" width="24" height="24" viewBox="0 0 24 24"><circle cx="11" cy="12" r="10.5" fill="#3a6aa0"/><circle cx="11" cy="12" r="9" fill="none" stroke="#fff" stroke-width="1"/><text x="6" y="18" font-size="15" font-weight="bold" fill="#fff" font-family="Liberation Sans">?</text></svg>
<svg style="left:725px;top:126px;" width="2" height="28" viewBox="0 0 2 28"><rect x="0" y="0" width="2" height="2" fill="#b8b8bc"/><rect x="0" y="4" width="2" height="2" fill="#b8b8bc"/><rect x="0" y="8" width="2" height="2" fill="#b8b8bc"/><rect x="0" y="12" width="2" height="2" fill="#b8b8bc"/><rect x="0" y="16" width="2" height="2" fill="#b8b8bc"/><rect x="0" y="20" width="2" height="2" fill="#b8b8bc"/><rect x="0" y="24" width="2" height="2" fill="#b8b8bc"/></svg>
<svg style="left:736px;top:128px;" width="24" height="24" viewBox="0 0 24 24"><path d="M2 2H10L22 14V22H12L2 10Z" fill="#e8d4a8" stroke="#555" stroke-dasharray="1.5 1.5"/></svg>
<div class="a" style="left:768px;top:124px;width:1px;height:32px;background:#d0d0d4"></div>
<svg style="left:776px;top:128px;" width="24" height="24" viewBox="0 0 24 24"><rect x="1" y="1" width="17" height="17" fill="none" stroke="#ccc" stroke-width="2"/><rect x="6" y="6" width="17" height="17" fill="#ccc"/><rect x="5" y="5" width="15" height="15" fill="#e8d8b0" stroke="#666" stroke-dasharray="1.5 1.5"/></svg>
<div class="a" style="left:809px;top:124px;width:1px;height:32px;background:#d0d0d4"></div>
<svg style="left:817px;top:128px;" width="24" height="24" viewBox="0 0 24 24"><path d="M6 8Q10 2 16 4M18 16Q14 22 8 20" stroke="#9ac4b8" stroke-width="2" fill="none"/><path d="M2 12L2 24L5 21L8 25L10 24L7 20H11Z" fill="#777"/><path d="M13 1V13L16 10L19 15L21 14L18 9H22Z" fill="#fff" stroke="#555"/></svg>
<div class="a" style="left:850px;top:124px;width:1px;height:32px;background:#d0d0d4"></div>
<svg style="left:861px;top:128px;" width="24" height="24" viewBox="0 0 24 24"><rect x="1" y="1" width="21" height="21" fill="#efdcb4" stroke="#666" stroke-dasharray="1.6 1.6"/></svg>
<svg style="left:893px;top:139px;" width="11" height="6" viewBox="0 0 11 6"><path d="M0 0H11V1.5H0Z M1.5 2.5H9.5L5.5 6Z" fill="#b8b8b8"/></svg>
<div class="a" style="left:914px;top:124px;width:1px;height:32px;background:#d0d0d4"></div>
<svg style="left:924px;top:128px;" width="24" height="24" viewBox="0 0 24 24"><rect x="1" y="3" width="22" height="18" fill="none" stroke="#555" stroke-dasharray="2.4 1.6"/></svg>
<svg style="left:956px;top:139px;" width="11" height="6" viewBox="0 0 11 6"><path d="M0 0H11V1.5H0Z M1.5 2.5H9.5L5.5 6Z" fill="#b8b8b8"/></svg>
<svg style="left:981px;top:128px;" width="16" height="24" viewBox="0 0 16 24"><path d="M1 1V19L5 15L9 23L12 22L8 14H14Z" fill="#777"/></svg>
<svg style="left:1009px;top:128px;" width="24" height="24" viewBox="0 0 24 24"><path d="M1 6L12 1L23 6V18L12 23L1 18Z" fill="#e4d4b0"/><path d="M1 6L12 11L23 6" fill="none" stroke="#fff" opacity=".6"/><circle cx="17" cy="17" r="6" fill="#fff" stroke="#7ab8a8" stroke-width="1.5"/><path d="M14 17L16.5 19.5L20 14" stroke="#3a9a8a" stroke-width="1.5" fill="none"/></svg>
<div class="a" style="left:1043px;top:124px;width:1px;height:32px;background:#d0d0d4"></div>
<svg style="left:1051px;top:128px;" width="24" height="24" viewBox="0 0 24 24"><path d="M1 6L12 1L23 6V18L12 23L1 18Z" fill="#ccbfa0"/><path d="M1 6L12 11L23 6L12 1Z" fill="#e4d8bc"/><path d="M10 11V22" stroke="#7a7ab0" stroke-width="2"/></svg>
<svg style="left:1084px;top:128px;" width="24" height="24" viewBox="0 0 24 24"><path d="M1 6L12 1L23 6V18L12 23L1 18Z" fill="#e4d4b0"/><path d="M12 11L23 6V18L12 23Z" fill="#98acc4"/><path d="M1 6L12 11L23 6L12 1Z" fill="#ece0c8"/></svg>
<svg style="left:1117px;top:128px;" width="24" height="24" viewBox="0 0 24 24"><path d="M1 6L12 1L23 6V18L12 23L1 18Z" fill="#a8c8e8"/><path d="M12 11L23 6V18L12 23Z" fill="#88acd4"/><path d="M1 6L12 11L23 6L12 1Z" fill="#c4dcf0"/></svg>
<div class="a" style="left:1150px;top:124px;width:1px;height:32px;background:#d0d0d4"></div>
<svg style="left:1156px;top:128px;" width="24" height="24" viewBox="0 0 24 24"><path d="M1 6L12 1L23 6V18L12 23L1 18Z" fill="#f0c078"/><path d="M12 1L23 6V18L12 12Z" fill="#3a70a8"/><path d="M12 12L23 18L12 23Z" fill="#5a90c8"/><path d="M14 16L6 23" stroke="#111" stroke-width="2.2"/><path d="M4 24L10 23L6 19Z" fill="#111"/></svg>
<svg style="left:1191px;top:128px;" width="24" height="24" viewBox="0 0 24 24"><path d="M3 8Q8 1 16 5" stroke="#a0c8c0" stroke-width="2.5" fill="none"/><path d="M0 6L3 12L7 7Z" fill="#a0c8c0"/><path d="M10 7V23L13 19L16 25L19 24L16 18H21Z" fill="#777"/></svg>
<div class="a" style="left:1223px;top:124px;width:1px;height:32px;background:#d0d0d4"></div>
<div class="a" style="left:1228px;top:125px;width:30px;height:31px;background:#dcdcde"></div>
<svg style="left:1230px;top:128px;" width="24" height="24" viewBox="0 0 24 24"><circle cx="10" cy="10" r="8.5" fill="none" stroke="#a8c4dc" stroke-width="2"/><circle cx="10" cy="10" r="5" fill="#d4a888"/><circle cx="10" cy="10" r="3" fill="#c0cc90"/><circle cx="17" cy="17" r="6.5" fill="#f4f4f4" stroke="#888" stroke-width="1.3"/><path d="M17 13V17L19.5 19" stroke="#666" stroke-width="1.2" fill="none"/></svg>
<svg style="left:1264px;top:128px;" width="24" height="24" viewBox="0 0 24 24"><path d="M1 1V14L4 11L6 16L8 15L6 10H10Z" fill="#777"/><rect x="11.5" y="10.5" width="11" height="13" fill="#fff" stroke="#c8b898" stroke-width="1.5"/><rect x="14" y="8" width="6" height="4" fill="#fff" stroke="#c8b898"/><path d="M14 17L16.5 20L20.5 13" stroke="#3a9a8a" stroke-width="1.5" fill="none"/></svg>
<div class="a" style="left:1298px;top:124px;width:1px;height:32px;background:#d0d0d4"></div>
<svg style="left:1306px;top:128px;" width="24" height="24" viewBox="0 0 24 24"><circle cx="11" cy="12" r="10.5" fill="#f4e4e0" stroke="#e08a7a"/><circle cx="11" cy="12" r="8.5" fill="#e07a6a"/><path d="M5 6L17 18" stroke="#fff" stroke-width="3"/></svg>
<svg style="left:1339px;top:128px;" width="24" height="24" viewBox="0 0 24 24"><circle cx="11" cy="12" r="10.5" fill="#eef4f2" stroke="#8abcb0"/><circle cx="11" cy="12" r="8.5" fill="#9ac8bc"/><path d="M6 12L10 16L16 7" stroke="#fff" stroke-width="2.4" fill="none"/></svg>
<svg style="left:1372px;top:128px;" width="24" height="24" viewBox="0 0 24 24"><circle cx="11" cy="12" r="10.5" fill="#eef2f8" stroke="#8aa8cc"/><circle cx="11" cy="12" r="8.5" fill="#98b4d8"/><text x="6.5" y="17.5" font-size="14" font-weight="bold" fill="#fff" font-family="Liberation Sans">?</text></svg>
<svg style="left:1405px;top:167px;" width="26" height="2" viewBox="0 0 26 2"><rect x="0" y="0" width="2" height="2" fill="#b8b8bc"/><rect x="4" y="0" width="2" height="2" fill="#b8b8bc"/><rect x="8" y="0" width="2" height="2" fill="#b8b8bc"/><rect x="12" y="0" width="2" height="2" fill="#b8b8bc"/><rect x="16" y="0" width="2" height="2" fill="#b8b8bc"/><rect x="20" y="0" width="2" height="2" fill="#b8b8bc"/><rect x="24" y="0" width="2" height="2" fill="#b8b8bc"/></svg>
<svg style="left:1407px;top:184px;" width="24" height="15" viewBox="0 0 24 15"><rect x="0" y="0" width="24" height="15" fill="#e8c890"/><path d="M5 2H19V6H5ZM5 9H19V13H5Z" fill="none" stroke="#333" stroke-width="1.5"/></svg>
<svg style="left:5px;top:166px;" width="24" height="2" viewBox="0 0 24 2"><rect x="0" y="0" width="2" height="2" fill="#b8b8bc"/><rect x="4" y="0" width="2" height="2" fill="#b8b8bc"/><rect x="8" y="0" width="2" height="2" fill="#b8b8bc"/><rect x="12" y="0" width="2" height="2" fill="#b8b8bc"/><rect x="16" y="0" width="2" height="2" fill="#b8b8bc"/><rect x="20" y="0" width="2" height="2" fill="#b8b8bc"/></svg>
<svg style="left:6px;top:175px;" width="24" height="24" viewBox="0 0 24 24"><path d="M0 6L20 20H24V23H0Z" fill="#ecc07a"/><path d="M7 5H18M9 9H20M11 13H22" stroke="#2a3a5a" stroke-width="1.8"/><path d="M17 0L14 7H17L15 12L21 4H18L20 0Z" fill="#e0b020"/></svg>
<div class="a" style="left:1229px;top:27px;width:103px;height:24px;background:linear-gradient(#dceefa,#b4d8f2);border:1px solid #6aa0cc;border-radius:3px"></div>
<div class="a" style="left:1229px;top:27px;width:30px;height:24px;background:linear-gradient(#4ab0f0,#1a80d0);border-radius:3px 0 0 3px"></div>
<svg style="left:1233px;top:33px;" width="22" height="12" viewBox="0 0 22 12"><path d="M6 6Q2 2 4 1Q7 0 11 6Q15 12 18 11Q21 9 17 5" fill="none" stroke="#fff" stroke-width="2.6"/><path d="M6 6Q2 10 4 11Q7 12 11 6" fill="none" stroke="#fff" stroke-width="2.6"/></svg>
<div class="t" style="left:1272px;top:35px;font-size:12px;color:#5a7a9a;"><i class="c">拖拽上传</i></div>
<div class="t" style="left:1172px;top:23px;font-size:19px;color:#30dd20;letter-spacing:6px;-webkit-text-stroke:2.4px #30dd20">火星文制作</div>
<div class="t" style="left:1280px;top:18px;font-size:22px;color:#30dd20;font-weight:bold;font-family:'Liberation Serif'">:</div>
<div class="t" style="left:1302px;top:19px;font-size:23px;color:#30dd20;font-weight:bold;font-family:'Liberation Serif'">971867841</div>
<svg style="left:0px;top:0px;" width="1" height="1" viewBox="0 0 1 1"><path d="M393 508H1399" stroke="#868a8e" stroke-width="1.4" stroke-dasharray="24 8 8 8 8 8.6" fill="none"/><path d="M446 204H453L449.5 209Z" fill="#22dd22"/><path d="M636 414V688M628 421H651V688M1008.5 688V421H1026" stroke="#f0f040" stroke-width="1.4" fill="none"/><path d="M628.5 421V688L636 681M1026.5 421V688H1010" stroke="#3a82d4" stroke-width="1.4" fill="none"/><path d="M1023 443V440" stroke="#3a82d4" stroke-width="1.4" fill="none"/><path d="M1023.0 440.0 L631.5 440.0 L631.5 452.4 L1022.3 452.4 L1022.3 464.7 L632.9 464.7 L632.9 477.1 L1021.0 477.1 L1021.0 489.5 L634.3 489.5 L634.3 501.9 L1019.6 501.9 L1019.6 514.2 L635.7 514.2 L635.7 526.6 L1018.2 526.6 L1018.2 539.0 L637.1 539.0 L637.1 551.3 L1016.9 551.3 L1016.9 563.7 L638.5 563.7 L638.5 576.1 L1015.5 576.1 L1015.5 588.4 L639.9 588.4 L639.9 600.8 L1014.2 600.8 L1014.2 613.2 L641.3 613.2 L641.3 625.5 L1012.8 625.5 L1012.8 637.9 L642.7 637.9 L642.7 650.3 L1011.4 650.3 L1011.4 662.7 L644.1 662.7 L644.1 675.0 L1010.1 675.0 L1010.1 687.4 L645.5 687.4" stroke="#3a82d4" stroke-width="1.6" fill="none"/><path d="M620 428H636M628 420V436" stroke="#3a82d4" stroke-width="1.3"/><path d="M1043 689H1059M1051 681V697" stroke="#3a82d4" stroke-width="1.3"/><path d="M1343.5 254V222" stroke="#c01010" stroke-width="2"/><path d="M1343.5 216L1340 225H1347Z" fill="#c01010"/><path d="M1343 253.5H1373" stroke="#1020b0" stroke-width="2"/><path d="M1380 253.5L1371 250V257Z" fill="#1020b0"/></svg>
<div class="t" style="left:1339px;top:204px;font-size:11px;color:#d01010;font-weight:bold">X</div>
<div class="t" style="left:1382px;top:246px;font-size:11px;color:#1030c0;font-weight:bold">Z</div>
<div class="t" style="left:1339px;top:254px;font-size:11px;color:#fff;"><i class="c">刀</i></div>
<svg style="left:0px;top:0px;" width="1" height="1" viewBox="0 0 1 1"><path d="M1279.5 772V796M1375.5 772V796M1279.5 783.5H1375.5" stroke="#444" stroke-width="1.2"/></svg>
<div class="t" style="left:1296px;top:770px;font-size:13px;color:#111;font-weight:bold">7.119 mm</div>
<div class="t" style="left:1315px;top:785px;font-size:12px;color:#111;font-weight:bold"><i class="c">公制</i></div>
<div class="a" style="left:574px;top:569px;width:236px;height:28px;background:rgba(232,222,196,.55)"></div>
<div class="t" style="left:578px;top:573px;font-size:21px;color:rgba(110,150,145,.7);letter-spacing:5.5px;-webkit-text-stroke:1.2px rgba(110,150,145,.7)">教程购买</div>
<div class="t" style="left:662px;top:572px;font-size:22px;color:rgba(90,145,150,.8);">qq:971867841</div>
<svg style="left:1406px;top:211px;" width="28" height="24" viewBox="0 0 28 24"><rect x="1" y="1" width="22" height="22" fill="#fff" stroke="#5a7a92"/><circle cx="13" cy="10" r="7" fill="none" stroke="#444" stroke-width="2"/><path d="M8 15L2 22" stroke="#222" stroke-width="3"/></svg>
<svg style="left:1405px;top:255px;" width="26" height="2" viewBox="0 0 26 2"><rect x="0" y="0" width="2" height="2" fill="#b8b8bc"/><rect x="4" y="0" width="2" height="2" fill="#b8b8bc"/><rect x="8" y="0" width="2" height="2" fill="#b8b8bc"/><rect x="12" y="0" width="2" height="2" fill="#b8b8bc"/><rect x="16" y="0" width="2" height="2" fill="#b8b8bc"/><rect x="20" y="0" width="2" height="2" fill="#b8b8bc"/><rect x="24" y="0" width="2" height="2" fill="#b8b8bc"/></svg>
<svg style="left:1406px;top:264px;" width="28" height="26" viewBox="0 0 28 26"><path d="M2 2V24M22 2V8M2 5H22" stroke="#888" stroke-width="1.8"/><path d="M2 5L6 3V7ZM22 5L18 3V7Z" fill="#888"/><path d="M20 11L16 18H19L17 24L23 16H20L22 11Z" fill="#e8c850"/></svg>
<svg style="left:1406px;top:297px;" width="28" height="26" viewBox="0 0 28 26"><path d="M1 14Q6 6 12 7Q19 8 22 1V10Q19 17 12 16Q6 15 1 23Z" fill="#c8d8d0" stroke="#a0b0a8"/><path d="M20 10L16 17H19L17 23L23 15H20L22 10Z" fill="#e8c850"/></svg>
<svg style="left:1406px;top:330px;" width="28" height="26" viewBox="0 0 28 26"><path d="M8 1V15M1 8H15" stroke="#7aa0c8" stroke-width="3"/><path d="M20 10L16 17H19L17 23L23 15H20L22 10Z" fill="#e8c850"/></svg>
<svg style="left:1406px;top:363px;" width="28" height="26" viewBox="0 0 28 26"><path d="M2 22L20 4" stroke="#7aa0c8" stroke-width="2"/><path d="M20 0V6M17 3H23M2 19V25M-1 22H5" stroke="#7aa0c8" stroke-width="1.2"/><path d="M20 11L16 18H19L17 24L23 16H20L22 11Z" fill="#e8c850"/></svg>
<svg style="left:1406px;top:397px;" width="28" height="26" viewBox="0 0 28 26"><circle cx="11" cy="12" r="9" fill="none" stroke="#9ac0b8" stroke-width="2"/><path d="M20 10L16 17H19L17 23L23 15H20L22 10Z" fill="#e8c850"/></svg>
<svg style="left:1406px;top:430px;" width="28" height="26" viewBox="0 0 28 26"><path d="M2 24Q2 8 20 2" fill="none" stroke="#8ab0b0" stroke-width="2"/><path d="M20 11L16 18H19L17 24L23 16H20L22 11Z" fill="#e8c850"/></svg>
<svg style="left:1406px;top:464px;" width="28" height="26" viewBox="0 0 28 26"><path d="M1 14Q6 6 12 7Q19 8 22 1V10Q19 17 12 16Q6 15 1 23Z" fill="#8ac8b0" stroke="#5a9a88"/><path d="M20 10L16 17H19L17 23L23 15H20L22 10Z" fill="#e8c850"/></svg>
<svg style="left:1406px;top:497px;" width="28" height="26" viewBox="0 0 28 26"><path d="M1 6L11 1L21 6V18L11 23L1 18Z" fill="#e8c890"/><path d="M11 11L21 6V18L11 23Z" fill="#d8b478"/><path d="M20 10L16 17H19L17 23L23 15H20L22 10Z" fill="#e8c850"/></svg>
<svg style="left:1406px;top:530px;" width="28" height="26" viewBox="0 0 28 26"><path d="M1 6L11 1L21 6V18L11 23L1 18Z M1 6L11 11L21 6M11 11V23" fill="none" stroke="#8ab8b0" stroke-width="1.2"/><path d="M20 10L16 17H19L17 23L23 15H20L22 10Z" fill="#e8c850"/></svg>
<svg style="left:1406px;top:563px;" width="28" height="24" viewBox="0 0 28 24"><circle cx="11" cy="11.5" r="10" fill="#f4e0dc" stroke="#e0907a"/><circle cx="11" cy="11.5" r="8" fill="#e8806a"/><path d="M5.5 6L16.5 17" stroke="#fff" stroke-width="3"/></svg>
<div class="a" style="left:1403px;top:595px;width:34px;height:1px;background:#c8c8cc"></div>
<svg style="left:1406px;top:603px;" width="28" height="30" viewBox="0 0 28 30"><rect x="12" y="1" width="10" height="10" fill="#b8a0d0"/><rect x="1" y="11" width="11" height="11" fill="#eee" stroke="#ccc"/><path d="M19 12L15 19H18L16 25L22 17H19L21 12Z" fill="#e8c850"/></svg>
<svg style="left:1406px;top:637px;" width="28" height="26" viewBox="0 0 28 26"><path d="M1 2H8V22H1" fill="none" stroke="#5a7a92" stroke-width="1.5"/><rect x="2" y="4" width="4" height="4" fill="#8ab0d0"/><rect x="2" y="10" width="4" height="4" fill="#8ab0d0"/><rect x="2" y="16" width="4" height="4" fill="#8ab0d0"/><path d="M20 10L16 17H19L17 23L23 15H20L22 10Z" fill="#e8c850"/></svg>
<svg style="left:1406px;top:670px;" width="28" height="26" viewBox="0 0 28 26"><path d="M1 2H8V22H1" fill="none" stroke="#5a7a92" stroke-width="1.5"/><rect x="2" y="4" width="4" height="4" fill="#8ab0d0"/><rect x="2" y="10" width="4" height="4" fill="#8ab0d0"/><rect x="2" y="16" width="4" height="4" fill="#8ab0d0"/><path d="M9 4L14 6L18 12L14 14L10 9Z" fill="#fff" stroke="#777"/><path d="M20 11L16 18H19L17 24L23 16H20L22 11Z" fill="#e8c850"/></svg>
<div class="a" style="left:1403px;top:703px;width:34px;height:1px;background:#c8c8cc"></div>
<svg style="left:1406px;top:712px;" width="28" height="26" viewBox="0 0 28 26"><rect x="1" y="1" width="6" height="6" fill="#e09090"/><rect x="8" y="1" width="6" height="6" fill="#e0c070"/><rect x="15" y="1" width="6" height="6" fill="#88b8a8"/><rect x="1" y="8" width="6" height="6" fill="#d090b0"/><rect x="8" y="8" width="6" height="6" fill="#9090d0"/><path d="M20 10L16 17H19L17 23L23 15H20L22 10Z" fill="#e8c850"/></svg>
<svg style="left:1406px;top:745px;" width="28" height="26" viewBox="0 0 28 26"><path d="M1 5L10 1L19 5L10 9Z" fill="#6a9ad0"/><path d="M1 10L10 14L19 10L17 9L10 12L3 9Z" fill="#6a9ad0"/><path d="M1 15L10 19L19 15L17 14L10 17L3 14Z" fill="#6a9ad0"/><path d="M19 11L15 18H18L16 24L22 16H19L21 11Z" fill="#e8c850"/></svg>
<svg style="left:1406px;top:778px;" width="28" height="28" viewBox="0 0 28 28"><circle cx="11" cy="12" r="10" fill="#f4e0dc" stroke="#e0907a"/><circle cx="11" cy="12" r="8" fill="#e8806a"/><path d="M5.5 6.5L16.5 17.5" stroke="#fff" stroke-width="3"/><path d="M20 12L16 19H19L17 25L23 17H20L22 12Z" fill="#e8c850"/></svg>
<div class="a" style="left:1403px;top:809px;width:34px;height:1px;background:#c8c8cc"></div>
<div class="t" style="left:410px;top:784px;font-size:14px;color:#111;font-weight:bold"><i class="c">俯视图</i></div>
<div class="a" style="left:-10px;top:214px;width:598px;height:582px;background:linear-gradient(#9ab4d2 0px,#a6c0dc 14px,#b8d0ea 29px,#b6d0ea 100%);border:1px solid #20303a;border-radius:0 6px 0 0"></div>
<div class="a" style="left:-10px;top:215px;width:597px;height:1px;background:#d8ecf8"></div>
<div class="a" style="left:0px;top:244px;width:580px;height:544px;background:#f3f2f6"></div>
<div class="a" style="left:547px;top:224px;width:31px;height:17px;background:linear-gradient(#f0b4a4 0%,#e08a78 45%,#c85030 52%,#d86a50 80%,#e88a70 100%);border:1px solid #3a1a10;border-radius:3px"></div>
<svg style="left:555px;top:227px;" width="14" height="11" viewBox="0 0 14 11"><path d="M3.5 2L10.5 9M10.5 2L3.5 9" stroke="#5a2a20" stroke-width="3.4" stroke-linecap="round" opacity=".35"/><path d="M3.5 2L10.5 9M10.5 2L3.5 9" stroke="#fff" stroke-width="2.4" stroke-linecap="round"/></svg>
<svg style="left:396px;top:223px;" width="30" height="30" viewBox="0 0 30 30"><circle cx="15" cy="15" r="13.5" fill="none" stroke="#d01818" stroke-width="2.2"/></svg>
<svg style="left:410px;top:237px;" width="14" height="21" viewBox="0 0 14 21"><path d="M1 1V16L4.5 12.5L7.5 19L10 18L7 11.5H12Z" fill="#fff" stroke="#111" stroke-width="1"/></svg>
<div class="a" style="left:-5px;top:270px;width:578px;height:484px;background:#fff;border:1px solid #898c95"></div>
<div class="a" style="left:-5px;top:250px;width:36px;height:21px;background:#fff;border:1px solid #898c95;border-bottom:none"></div>
<div class="t" style="left:-1px;top:254px;font-size:12px;color:#111;"><i class="c">参数</i></div>
<div class="a" style="left:31px;top:252px;width:81px;height:18px;background:linear-gradient(#f4f4f4,#dcdcdc);border:1px solid #898c95;border-bottom:none"></div>
<div class="t" style="left:35px;top:255px;font-size:12px;color:#111;"><i class="c">切入粗车参数</i></div>
<div class="a" style="left:113px;top:252px;width:82px;height:18px;background:linear-gradient(#f4f4f4,#dcdcdc);border:1px solid #898c95;border-bottom:none"></div>
<div class="t" style="left:119px;top:255px;font-size:12px;color:#111;"><i class="c">切入精车参数</i></div>
<svg style="left:28px;top:288px;" width="13" height="13" viewBox="0 0 13 13"><rect x=".5" y=".5" width="12" height="12" fill="#eef2f8" stroke="#8a9aaa"/><path d="M3 6.5L5.5 9.5L10 3" stroke="#2a3a8a" stroke-width="1.8" fill="none"/></svg>
<div class="t" style="left:44px;top:289px;font-size:12px;color:#111;"><i class="c">使用毛坯外边界</i></div>
<div class="a" style="left:-5px;top:315px;width:130px;height:201px;border:1px solid #d6d6d6;border-radius:4px"></div>
<div class="a" style="left:-3px;top:328px;width:44px;height:119px;background:#6e6e6e;border-top:1px solid #6a6a6a;border-right:2px solid #9a9a9a;border-bottom:2px solid #e0e0e0"></div>
<svg style="left:0px;top:330px;" width="38" height="114" viewBox="0 0 38 114"><rect width="38" height="114" fill="#000080"/><circle cx="-21" cy="57" r="48" fill="#000" stroke="#e8e8e8" stroke-width="1.2"/><path d="M13 22L10 25M27 57H23M13 92L10 89" stroke="#e8e8e8" stroke-width="1.2"/></svg>
<div class="t" style="left:48px;top:323px;font-size:12px;color:#111;"><i class="c">角度</i>:</div>
<div class="a" style="left:48px;top:340px;width:60px;height:19px;background:#ffff99;border:1px solid #c8c8c8"></div>
<div class="t" style="left:51px;top:344px;font-size:11px;color:#111;font-family:'Liberation Mono'">90.0</div>
<div class="btn" style="left:50px;top:368px;width:58px;height:19px"></div>
<div class="btn" style="left:50px;top:392px;width:58px;height:19px"></div>
<div class="btn" style="left:50px;top:416px;width:58px;height:19px"></div>
<div class="btn" style="left:50px;top:440px;width:58px;height:19px"></div>
<div class="btn" style="left:50px;top:464px;width:58px;height:19px"></div>
<div class="btn" style="left:50px;top:488px;width:58px;height:19px"></div>
<div class="t" style="left:58px;top:371px;font-size:12px;color:#111;"><i class="c">外径</i> (D)</div>
<div class="t" style="left:58px;top:395px;font-size:12px;color:#111;"><i class="c">内径</i> (I)</div>
<div class="t" style="left:58px;top:419px;font-size:12px;color:#111;"><i class="c">前端</i> (A)</div>
<div class="t" style="left:58px;top:443px;font-size:12px;color:#111;"><i class="c">后端</i> (B)</div>
<div class="a" style="left:51px;top:464px;width:56px;height:40px;overflow:hidden">
<div class="t" style="left:-6px;top:3px;font-size:12px;color:#111;"><i class="c">切入方向</i> (P)</div>
<div class="t" style="left:-6px;top:27px;font-size:12px;color:#111;"><i class="c">曲线方向</i> (L)</div>
</div>
<div class="a" style="left:3px;top:455px;width:30px;height:21px;background:#fff;border:1px solid #e0e0e0"></div>
<div class="t" style="left:6px;top:459px;font-size:11px;color:#111;font-family:'Liberation Mono'">45</div>
<div class="a" style="left:-5px;top:530px;width:130px;height:112px;border:1px solid #d6d6d6;border-radius:4px"></div>
<div class="btn" style="left:-8px;top:542px;width:102px;height:19px"></div>
<div class="t" style="left:0px;top:545px;font-size:12px;color:#111;">=  <i class="c">左侧</i> (T)</div>
<div class="btn" style="left:-8px;top:566px;width:102px;height:19px"></div>
<div class="t" style="left:0px;top:569px;font-size:12px;color:#111;">=  <i class="c">右侧</i> (S)</div>
<div class="btn" style="left:-8px;top:590px;width:102px;height:19px"></div>
<div class="t" style="left:0px;top:593px;font-size:12px;color:#111;">=  <i class="c">外角</i> (U)</div>
<div class="btn" style="left:-8px;top:614px;width:102px;height:19px"></div>
<div class="t" style="left:0px;top:617px;font-size:12px;color:#111;">=  <i class="c">内角</i> (O)</div>
<div class="a" style="left:201px;top:286px;width:203px;height:53px;border:1px solid #d6d6d6;border-radius:4px"></div>
<div class="a" style="left:207px;top:279px;width:88px;height:14px;background:#fff"></div>
<div class="t" style="left:210px;top:280px;font-size:12px;color:#111;"><i class="c">延伸沟槽到毛坯</i></div>
<svg style="left:214px;top:303px;" width="36" height="27" viewBox="0 0 36 27"><rect x="0" y="0" width="36" height="27" fill="#777"/><rect x="1" y="1" width="34" height="25" fill="#7f7f7f"/><rect x="1" y="1" width="10" height="10" fill="#808000"/><rect x="25" y="1" width="10" height="10" fill="#808000"/><rect x="9" y="1" width="2" height="10" fill="#e02020"/><rect x="25" y="1" width="2" height="10" fill="#e02020"/><path d="M11 0H25V11L19 21H17L11 11Z" fill="#fff"/><path d="M0 11H11L17 21H19L25 11H36" stroke="#000" stroke-width="1.2" fill="none"/><rect x=".5" y=".5" width="35" height="26" fill="none" stroke="#222"/></svg>
<svg style="left:257px;top:299px;" width="14" height="14" viewBox="0 0 14 14"><defs><radialGradient id="rg" cx="45%" cy="40%" r="55%"><stop offset="0" stop-color="#bfe8ff"/><stop offset=".45" stop-color="#2a80bb"/><stop offset="1" stop-color="#0a3a66"/></radialGradient></defs><circle cx="7" cy="7" r="6.3" fill="#e8e8e8" stroke="#8a9aa8"/><circle cx="7" cy="7" r="3.8" fill="url(#rg)"/></svg>
<div class="t" style="left:274px;top:300px;font-size:12px;color:#111;"><i class="c">与沟槽角度平行</i></div>
<svg style="left:257px;top:318px;" width="14" height="14" viewBox="0 0 14 14"><defs><radialGradient id="rg0" cx="40%" cy="35%" r="65%"><stop offset="0" stop-color="#fff"/><stop offset="1" stop-color="#d4d4d4"/></radialGradient></defs><circle cx="7" cy="7" r="6.3" fill="url(#rg0)" stroke="#a8a8a8"/><circle cx="7" cy="7" r="4" fill="none" stroke="#c8c8c8" stroke-width=".8"/></svg>
<div class="t" style="left:274px;top:319px;font-size:12px;color:#111;"><i class="c">与沟槽壁边相切</i></div>
<div class="a" style="left:440px;top:303px;width:111px;height:20px;background:linear-gradient(#f4f6f8,#e4e8ec 50%,#d4d8dc 52%,#e0e4e8);border:1px solid #3c7fb1;border-radius:3px;box-shadow:inset 0 0 0 1px #bfe2f8"></div>
<div class="a" style="left:443px;top:306px;width:105px;height:14px;border:1px dotted #333"></div>
<div class="t" style="left:461px;top:307px;font-size:12px;color:#111;"><i class="c">显示图形</i> (G)</div>
<div class="t" style="left:164px;top:367px;font-size:12px;color:#9a9a9a;"><i class="c">高度</i>:</div>
<div class="a" style="left:201px;top:362px;width:60px;height:21px;background:#fff;border:1px solid #c4c4c4"></div>
<div class="t" style="left:204px;top:366px;font-size:11px;color:#8a8a8a;font-family:'Liberation Mono'">10.0</div>
<svg style="left:181px;top:402px;" width="14" height="14" viewBox="0 0 14 14"><defs><radialGradient id="rg" cx="45%" cy="40%" r="55%"><stop offset="0" stop-color="#bfe8ff"/><stop offset=".45" stop-color="#2a80bb"/><stop offset="1" stop-color="#0a3a66"/></radialGradient></defs><circle cx="7" cy="7" r="6.3" fill="#e8e8e8" stroke="#8a9aa8"/><circle cx="7" cy="7" r="3.8" fill="url(#rg)"/></svg>
<div class="t" style="left:198px;top:403px;font-size:12px;color:#111;"><i class="c">圆角半径</i>:</div>
<div class="a" style="left:201px;top:419px;width:60px;height:20px;background:#ffff99;border:1px solid #c8c8c8"></div>
<div class="t" style="left:204px;top:423px;font-size:11px;color:#111;font-family:'Liberation Mono'">0.0</div>
<svg style="left:183px;top:449px;" width="14" height="14" viewBox="0 0 14 14"><defs><radialGradient id="rg0" cx="40%" cy="35%" r="65%"><stop offset="0" stop-color="#fff"/><stop offset="1" stop-color="#d4d4d4"/></radialGradient></defs><circle cx="7" cy="7" r="6.3" fill="url(#rg0)" stroke="#a8a8a8"/><circle cx="7" cy="7" r="4" fill="none" stroke="#c8c8c8" stroke-width=".8"/></svg>
<div class="a" style="left:203px;top:446px;width:58px;height:19px;border:1px solid #b4b4b4;border-radius:3px;background:linear-gradient(#fafafa,#f0f0f0 50%,#e6e6e6 52%,#ededed)"></div>
<div class="t" style="left:210px;top:449px;font-size:12px;color:#8a8a8a;"><i class="c">倒角</i> (R)</div>
<div class="t" style="left:218px;top:475px;font-size:12px;color:#111;"><i class="c">锥度角</i>:</div>
<div class="a" style="left:201px;top:490px;width:60px;height:20px;background:#ffff99;border:1px solid #c8c8c8"></div>
<div class="t" style="left:204px;top:494px;font-size:11px;color:#111;font-family:'Liberation Mono'">0.0</div>
<svg style="left:181px;top:521px;" width="14" height="14" viewBox="0 0 14 14"><defs><radialGradient id="rg" cx="45%" cy="40%" r="55%"><stop offset="0" stop-color="#bfe8ff"/><stop offset=".45" stop-color="#2a80bb"/><stop offset="1" stop-color="#0a3a66"/></radialGradient></defs><circle cx="7" cy="7" r="6.3" fill="#e8e8e8" stroke="#8a9aa8"/><circle cx="7" cy="7" r="3.8" fill="url(#rg)"/></svg>
<div class="t" style="left:198px;top:522px;font-size:12px;color:#111;"><i class="c">圆角半径</i>:</div>
<div class="a" style="left:201px;top:538px;width:60px;height:20px;background:#ffff99;border:1px solid #c8c8c8"></div>
<div class="t" style="left:204px;top:542px;font-size:11px;color:#111;font-family:'Liberation Mono'">0.0</div>
<svg style="left:182px;top:569px;" width="14" height="14" viewBox="0 0 14 14"><defs><radialGradient id="rg0" cx="40%" cy="35%" r="65%"><stop offset="0" stop-color="#fff"/><stop offset="1" stop-color="#d4d4d4"/></radialGradient></defs><circle cx="7" cy="7" r="6.3" fill="url(#rg0)" stroke="#a8a8a8"/><circle cx="7" cy="7" r="4" fill="none" stroke="#c8c8c8" stroke-width=".8"/></svg>
<div class="a" style="left:202px;top:566px;width:58px;height:19px;border:1px solid #b4b4b4;border-radius:3px;background:linear-gradient(#fafafa,#f0f0f0 50%,#e6e6e6 52%,#ededed)"></div>
<div class="t" style="left:209px;top:569px;font-size:12px;color:#8a8a8a;"><i class="c">倒角</i> (M)</div>
<svg style="left:163px;top:602px;" width="13" height="13" viewBox="0 0 13 13"><rect x=".5" y=".5" width="12" height="12" fill="#f4f4f4" stroke="#b8b8b8"/></svg>
<div class="t" style="left:179px;top:603px;font-size:12px;color:#777;"><i class="c">使用刀具宽度</i></div>
<div class="t" style="left:164px;top:625px;font-size:12px;color:#9a9a9a;"><i class="c">宽度</i>:</div>
<div class="a" style="left:201px;top:619px;width:60px;height:21px;background:#fff;border:1px solid #c4c4c4"></div>
<div class="t" style="left:204px;top:623px;font-size:11px;color:#8a8a8a;font-family:'Liberation Mono'">5.0</div>
<div class="t" style="left:457px;top:361px;font-size:12px;color:#111;"><i class="c">沟槽位置</i></div>
<div class="t" style="left:464px;top:403px;font-size:12px;color:#111;"><i class="c">圆角半径</i>:</div>
<svg style="left:521px;top:402px;" width="14" height="14" viewBox="0 0 14 14"><defs><radialGradient id="rg" cx="45%" cy="40%" r="55%"><stop offset="0" stop-color="#bfe8ff"/><stop offset=".45" stop-color="#2a80bb"/><stop offset="1" stop-color="#0a3a66"/></radialGradient></defs><circle cx="7" cy="7" r="6.3" fill="#e8e8e8" stroke="#8a9aa8"/><circle cx="7" cy="7" r="3.8" fill="url(#rg)"/></svg>
<div class="a" style="left:457px;top:419px;width:60px;height:20px;background:#ffff99;border:1px solid #c8c8c8"></div>
<div class="t" style="left:460px;top:423px;font-size:11px;color:#111;font-family:'Liberation Mono'">0.0</div>
<div class="a" style="left:458px;top:446px;width:58px;height:19px;border:1px solid #b4b4b4;border-radius:3px;background:linear-gradient(#fafafa,#f0f0f0 50%,#e6e6e6 52%,#ededed)"></div>
<div class="t" style="left:465px;top:449px;font-size:12px;color:#8a8a8a;"><i class="c">倒角</i> (F)</div>
<svg style="left:522px;top:449px;" width="14" height="14" viewBox="0 0 14 14"><defs><radialGradient id="rg0" cx="40%" cy="35%" r="65%"><stop offset="0" stop-color="#fff"/><stop offset="1" stop-color="#d4d4d4"/></radialGradient></defs><circle cx="7" cy="7" r="6.3" fill="url(#rg0)" stroke="#a8a8a8"/><circle cx="7" cy="7" r="4" fill="none" stroke="#c8c8c8" stroke-width=".8"/></svg>
<div class="t" style="left:457px;top:475px;font-size:12px;color:#111;"><i class="c">锥度角</i>:</div>
<div class="a" style="left:457px;top:490px;width:60px;height:20px;background:#ffff99;border:1px solid #c8c8c8"></div>
<div class="t" style="left:460px;top:494px;font-size:11px;color:#111;font-family:'Liberation Mono'">0.0</div>
<div class="t" style="left:464px;top:522px;font-size:12px;color:#111;"><i class="c">圆角半径</i>:</div>
<svg style="left:521px;top:521px;" width="14" height="14" viewBox="0 0 14 14"><defs><radialGradient id="rg" cx="45%" cy="40%" r="55%"><stop offset="0" stop-color="#bfe8ff"/><stop offset=".45" stop-color="#2a80bb"/><stop offset="1" stop-color="#0a3a66"/></radialGradient></defs><circle cx="7" cy="7" r="6.3" fill="#e8e8e8" stroke="#8a9aa8"/><circle cx="7" cy="7" r="3.8" fill="url(#rg)"/></svg>
<div class="a" style="left:457px;top:538px;width:60px;height:20px;background:#ffff99;border:1px solid #c8c8c8"></div>
<div class="t" style="left:460px;top:542px;font-size:11px;color:#111;font-family:'Liberation Mono'">0.0</div>
<div class="a" style="left:458px;top:566px;width:58px;height:19px;border:1px solid #b4b4b4;border-radius:3px;background:linear-gradient(#fafafa,#f0f0f0 50%,#e6e6e6 52%,#ededed)"></div>
<div class="t" style="left:465px;top:569px;font-size:12px;color:#8a8a8a;"><i class="c">倒角</i> (E)</div>
<svg style="left:522px;top:569px;" width="14" height="14" viewBox="0 0 14 14"><defs><radialGradient id="rg0" cx="40%" cy="35%" r="65%"><stop offset="0" stop-color="#fff"/><stop offset="1" stop-color="#d4d4d4"/></radialGradient></defs><circle cx="7" cy="7" r="6.3" fill="url(#rg0)" stroke="#a8a8a8"/><circle cx="7" cy="7" r="4" fill="none" stroke="#c8c8c8" stroke-width=".8"/></svg>
<svg style="left:0px;top:0px;" width="1" height="1" viewBox="0 0 1 1"><path d="M273.5 418.5H294Q304 418 308 433L327 553Q331 571 347 571H372Q386 571 389 553L408 433Q412 418 422 418.5H443.5V587H273.5Z" fill="#808080" stroke="#000" stroke-width="1.2"/><path d="M294 418.5Q304 418 308 433M408 433Q412 418 422 418.5M327 553Q329 569 340 571M376 571Q387 569 389 553" stroke="#ffff60" stroke-width="2" fill="none"/><path d="M264 372H358.7V571" stroke="#c41e1e" stroke-width="1.2" fill="none"/><path d="M294 418.5H422" stroke="#c41e1e" stroke-width="1.2" stroke-dasharray="6 3" fill="none"/><path d="M330.5 400V602M386.7 400V602" stroke="#c41e1e" stroke-width="1.2" stroke-dasharray="5 2 40 2" fill="none"/><path d="M330.5 432V602M386.7 432V602" stroke="#c41e1e" stroke-width="1.2" fill="none"/><path d="M358.7 421L355 429H362.4Z M358.7 567L355 559H362.4Z" fill="#c41e1e"/><path d="M264 429H291L295 432L300 426" stroke="#c41e1e" stroke-width="1.2" fill="none"/><path d="M305 423L297 425L301 430Z" fill="#c41e1e"/><path d="M264 499H285Q290 490 311 482" stroke="#c41e1e" stroke-width="1.2" fill="none"/><path d="M314 481L305 480L307 487Z" fill="#c41e1e"/><path d="M264 548H352L336 564" stroke="#c41e1e" stroke-width="1.2" fill="none"/><path d="M333 567L335 559L340 564Z" fill="#c41e1e"/><path d="M264 628H288L318 600" stroke="#c41e1e" stroke-width="1.2" fill="none"/><path d="M456 429H426L422 432L417 426" stroke="#c41e1e" stroke-width="1.2" fill="none"/><path d="M412 423L420 425L416 430Z" fill="#c41e1e"/><path d="M456 499H432Q427 490 406 482" stroke="#c41e1e" stroke-width="1.2" fill="none"/><path d="M403 481L412 480L410 487Z" fill="#c41e1e"/><path d="M456 548H364L380 564" stroke="#c41e1e" stroke-width="1.2" fill="none"/><path d="M383 567L381 559L376 564Z" fill="#c41e1e"/><path d="M355 487L334 481M362 487L383 481" stroke="#c41e1e" stroke-width="1.2" fill="none"/><path d="M331 481L339 478L338 485Z M386 481L378 478L379 485Z" fill="#c41e1e"/><path d="M334 600L340 597V603Z M383 600L377 597V603Z" fill="#c41e1e"/><path d="M387 418L446 366H453" stroke="#f0f070" stroke-width="1.2" fill="none"/><path d="M330.5 412.5L336.5 418.5L330.5 424.5L324.5 418.5Z" fill="#22dd22" stroke="#22dd22"/><path d="M322.5 418.5H338.5M330.5 410.5V426.5" stroke="#22dd22" stroke-width="1.4"/><circle cx="330.5" cy="418.5" r="4.5" fill="none" stroke="#fff" stroke-width=".6" opacity=".5"/><path d="M386.7 412.5L392.7 418.5L386.7 424.5L380.7 418.5Z" fill="#f0f020" stroke="#f0f020"/><path d="M378.7 418.5H394.7M386.7 410.5V426.5" stroke="#f0f020" stroke-width="1.4"/><circle cx="386.7" cy="418.5" r="4.5" fill="none" stroke="#fff" stroke-width=".6" opacity=".5"/><path d="M330.5 565L336.5 571L330.5 577L324.5 571Z" fill="#e020e0" stroke="#e020e0"/><path d="M322.5 571H338.5M330.5 563V579" stroke="#e020e0" stroke-width="1.4"/><circle cx="330.5" cy="571" r="4.5" fill="none" stroke="#fff" stroke-width=".6" opacity=".5"/><path d="M386.7 565L392.7 571L386.7 577L380.7 571Z" fill="#20e0e0" stroke="#20e0e0"/><path d="M378.7 571H394.7M386.7 563V579" stroke="#20e0e0" stroke-width="1.4"/><circle cx="386.7" cy="571" r="4.5" fill="none" stroke="#fff" stroke-width=".6" opacity=".5"/></svg>
<div class="a" style="left:401px;top:762px;width:52px;height:25px;background:linear-gradient(#eaf6fc,#d8ecf6 50%,#c4dcea 52%,#d4e8f4);border:1px solid #3c7fb1;border-radius:3px"></div>
<svg style="left:417px;top:764px;" width="22" height="20" viewBox="0 0 22 20"><path d="M1 10L8 19L21 1L8 13Z" fill="#22aa22" stroke="#0a5a0a" stroke-width="1"/><path d="M3 10L8 15L18 4" stroke="#9ef09e" stroke-width="1.2" fill="none"/></svg>
<div class="btn" style="left:459px;top:762px;width:51px;height:25px"></div>
<svg style="left:475px;top:764px;" width="20" height="21" viewBox="0 0 20 21"><path d="M1 4L5 0.5L10 6L15 0.5L19 4L13.5 10.5L19 17L15 20.5L10 15L5 20.5L1 17L6.5 10.5Z" fill="#f04010" stroke="#a02000" stroke-width=".9"/></svg>
<div class="btn" style="left:517px;top:762px;width:51px;height:25px"></div>
<svg style="left:535px;top:764px;" width="18" height="21" viewBox="0 0 18 21"><path d="M3 6.5Q3 1.5 9 1.5Q15 1.5 15 6Q15 9 11.5 11Q9.5 12.5 9.5 14.5" stroke="#333" stroke-width="3.6" fill="none"/><path d="M3 6.5Q3 1.5 9 1.5Q15 1.5 15 6Q15 9 11.5 11Q9.5 12.5 9.5 14.5" stroke="#c8c8d0" stroke-width="1.6" fill="none"/><circle cx="9.5" cy="18" r="2.3" fill="#aaa" stroke="#333"/></svg>
<div class="a" style="left:0px;top:860px;width:1440px;height:40px;background:linear-gradient(90deg,#7d90a6 0px,#8599ae 60px,#97afc6 120px,#a5c2db 200px,#a8c5de 600px,#a6c2da 940px,#90a8bf 1010px,#8aa0b6 1100px,#889eb4 1440px)"></div>
<div class="a" style="left:0px;top:860px;width:1440px;height:1px;background:#9fb2c4"></div>
<svg style="left:9px;top:862px;" width="37" height="37" viewBox="0 0 37 37"><defs><radialGradient id="orb" cx="50%" cy="40%" r="60%"><stop offset="0" stop-color="#7fd0ff"/><stop offset=".6" stop-color="#1a6fb0"/><stop offset="1" stop-color="#0a2f5a"/></radialGradient></defs><circle cx="18.5" cy="18.5" r="18" fill="url(#orb)" stroke="#2a4a6a"/><path d="M9 12Q13 9 18 12V18Q13 15 9 18Z" fill="#f25022"/><path d="M19 12Q23 9 28 12V18Q23 15 19 18Z" fill="#7fba00"/><path d="M9 19Q13 16 18 19V25Q13 22 9 25Z" fill="#00a4ef"/><path d="M19 19Q23 16 28 19V25Q23 22 19 25Z" fill="#ffb900"/><ellipse cx="18.5" cy="9" rx="13" ry="6" fill="#fff" opacity=".25"/></svg>
<svg style="left:68px;top:864px;" width="32" height="32" viewBox="0 0 32 32"><circle cx="10" cy="10" r="8" fill="#7cc520"/><circle cx="22" cy="10" r="8" fill="#3a8ee6"/><circle cx="10" cy="22" r="8" fill="#f5c200"/><circle cx="22" cy="22" r="8" fill="#e33a2a"/></svg>
<svg style="left:118px;top:865px;" width="8" height="30" viewBox="0 0 8 30"><rect x="0" y="0" width="1.6" height="1.6" fill="#3a4a5a"/><rect x="0" y="3" width="1.6" height="1.6" fill="#3a4a5a"/><rect x="0" y="6" width="1.6" height="1.6" fill="#3a4a5a"/><rect x="0" y="9" width="1.6" height="1.6" fill="#3a4a5a"/><rect x="0" y="12" width="1.6" height="1.6" fill="#3a4a5a"/><rect x="0" y="15" width="1.6" height="1.6" fill="#3a4a5a"/><rect x="0" y="18" width="1.6" height="1.6" fill="#3a4a5a"/><rect x="0" y="21" width="1.6" height="1.6" fill="#3a4a5a"/><rect x="0" y="24" width="1.6" height="1.6" fill="#3a4a5a"/><rect x="0" y="27" width="1.6" height="1.6" fill="#3a4a5a"/><rect x="3" y="0" width="1.6" height="1.6" fill="#3a4a5a"/><rect x="3" y="3" width="1.6" height="1.6" fill="#3a4a5a"/><rect x="3" y="6" width="1.6" height="1.6" fill="#3a4a5a"/><rect x="3" y="9" width="1.6" height="1.6" fill="#3a4a5a"/><rect x="3" y="12" width="1.6" height="1.6" fill="#3a4a5a"/><rect x="3" y="15" width="1.6" height="1.6" fill="#3a4a5a"/><rect x="3" y="18" width="1.6" height="1.6" fill="#3a4a5a"/><rect x="3" y="21" width="1.6" height="1.6" fill="#3a4a5a"/><rect x="3" y="24" width="1.6" height="1.6" fill="#3a4a5a"/><rect x="3" y="27" width="1.6" height="1.6" fill="#3a4a5a"/><rect x="6" y="0" width="1.6" height="1.6" fill="#3a4a5a"/><rect x="6" y="3" width="1.6" height="1.6" fill="#3a4a5a"/><rect x="6" y="6" width="1.6" height="1.6" fill="#3a4a5a"/><rect x="6" y="9" width="1.6" height="1.6" fill="#3a4a5a"/><rect x="6" y="12" width="1.6" height="1.6" fill="#3a4a5a"/><rect x="6" y="15" width="1.6" height="1.6" fill="#3a4a5a"/><rect x="6" y="18" width="1.6" height="1.6" fill="#3a4a5a"/><rect x="6" y="21" width="1.6" height="1.6" fill="#3a4a5a"/><rect x="6" y="24" width="1.6" height="1.6" fill="#3a4a5a"/><rect x="6" y="27" width="1.6" height="1.6" fill="#3a4a5a"/></svg>
<div class="a" style="left:136px;top:861px;width:59px;height:39px;background:linear-gradient(#d4dfe9,#b4c6d8);border:1px solid #6f8296;border-radius:3px"></div>
<svg style="left:150px;top:864px;" width="32" height="32" viewBox="0 0 32 32"><rect x="2" y="2" width="28" height="28" rx="6" fill="#1e8ee8"/><rect x="2" y="2" width="28" height="14" rx="6" fill="#4ab0ff" opacity=".7"/><path d="M7 8H25L16 25Z" fill="none" stroke="#fff" stroke-width="3"/></svg>
<div class="a" style="left:198px;top:861px;width:58px;height:39px;background:linear-gradient(#eef2f6,#d4dde6);border:1px solid #8c9aa8;border-radius:3px"></div>
<svg style="left:210px;top:864px;" width="40" height="34" viewBox="0 0 40 34"><path d="M3 5H13L30 32H20Z" fill="#2a2a2a"/><path d="M26 8H34L14 32H6Z" fill="#777"/><path d="M3 5H13L16 10H8Z" fill="#555"/><text x="32" y="12" font-size="12" font-weight="bold" fill="#d02020" font-family="Liberation Sans">9</text></svg>
<svg style="left:1004px;top:863px;" width="6" height="33" viewBox="0 0 6 33"><rect x="0" y="0" width="1.6" height="1.6" fill="#3a4a5a"/><rect x="0" y="3" width="1.6" height="1.6" fill="#3a4a5a"/><rect x="0" y="6" width="1.6" height="1.6" fill="#3a4a5a"/><rect x="0" y="9" width="1.6" height="1.6" fill="#3a4a5a"/><rect x="0" y="12" width="1.6" height="1.6" fill="#3a4a5a"/><rect x="0" y="15" width="1.6" height="1.6" fill="#3a4a5a"/><rect x="0" y="18" width="1.6" height="1.6" fill="#3a4a5a"/><rect x="0" y="21" width="1.6" height="1.6" fill="#3a4a5a"/><rect x="0" y="24" width="1.6" height="1.6" fill="#3a4a5a"/><rect x="0" y="27" width="1.6" height="1.6" fill="#3a4a5a"/><rect x="0" y="30" width="1.6" height="1.6" fill="#3a4a5a"/><rect x="3" y="0" width="1.6" height="1.6" fill="#3a4a5a"/><rect x="3" y="3" width="1.6" height="1.6" fill="#3a4a5a"/><rect x="3" y="6" width="1.6" height="1.6" fill="#3a4a5a"/><rect x="3" y="9" width="1.6" height="1.6" fill="#3a4a5a"/><rect x="3" y="12" width="1.6" height="1.6" fill="#3a4a5a"/><rect x="3" y="15" width="1.6" height="1.6" fill="#3a4a5a"/><rect x="3" y="18" width="1.6" height="1.6" fill="#3a4a5a"/><rect x="3" y="21" width="1.6" height="1.6" fill="#3a4a5a"/><rect x="3" y="24" width="1.6" height="1.6" fill="#3a4a5a"/><rect x="3" y="27" width="1.6" height="1.6" fill="#3a4a5a"/><rect x="3" y="30" width="1.6" height="1.6" fill="#3a4a5a"/></svg>
<svg style="left:1019px;top:873px;" width="18" height="12" viewBox="0 0 18 12"><rect x="1" y="1" width="16" height="10" rx="1" fill="#e0e4e8" stroke="#778"/><path d="M3 4H15M3 7H15" stroke="#889" stroke-dasharray="1.5 1"/></svg>
<svg style="left:1040px;top:869px;" width="19" height="19" viewBox="0 0 19 19"><circle cx="9.5" cy="9.5" r="9" fill="#1a3a9a" stroke="#0a2060"/><text x="5" y="15" font-size="13" font-weight="bold" fill="#fff" font-family="Liberation Sans">?</text></svg>
<svg style="left:1066px;top:867px;" width="10" height="22" viewBox="0 0 10 22"><rect x="2" y="2" width="5" height="5" fill="#eef"/><path d="M5 10L9 14L5 18L1 14Z" fill="#fff"/></svg>
<svg style="left:1085px;top:871px;" width="18" height="18" viewBox="0 0 18 18"><rect x="0" y="0" width="18" height="18" fill="#2a8ad8"/><circle cx="6" cy="10" r="3.5" fill="none" stroke="#fff" stroke-width="1.6"/><circle cx="12" cy="10" r="3.5" fill="none" stroke="#fff" stroke-width="1.6"/><circle cx="9" cy="6" r="3" fill="none" stroke="#fff" stroke-width="1.6"/></svg>
<svg style="left:1112px;top:868px;" width="18" height="20" viewBox="0 0 18 20"><path d="M1 1L12 14M12 1L2 12" stroke="#222" stroke-width="1.6"/><rect x="8" y="9" width="9" height="10" fill="#c8c8f0"/></svg>
<svg style="left:1133px;top:869px;" width="22" height="20" viewBox="0 0 22 20"><circle cx="10" cy="11" r="8" fill="#e8823a"/><path d="M2 2L6 7M18 2L14 7" stroke="#a04010" stroke-width="2"/><circle cx="17" cy="16" r="4" fill="#fff" stroke="#333"/></svg>
<svg style="left:1157px;top:869px;" width="20" height="20" viewBox="0 0 20 20"><rect x="1" y="8" width="15" height="10" fill="#f0c040" stroke="#554"/><rect x="7" y="1" width="11" height="12" fill="#fff" stroke="#335"/><text x="10" y="11" font-size="9" font-weight="bold" fill="#2040a0" font-family="Liberation Sans">i</text></svg>
<svg style="left:1180px;top:870px;" width="22" height="18" viewBox="0 0 22 18"><rect x="1" y="3" width="14" height="12" fill="#eee" stroke="#333"/><path d="M3 6H13M3 9H11M3 12H13" stroke="#555"/><rect x="13" y="5" width="8" height="8" fill="#333"/></svg>
<svg style="left:1205px;top:870px;" width="18" height="18" viewBox="0 0 18 18"><circle cx="9" cy="9" r="8.5" fill="#555"/><circle cx="9" cy="9" r="6" fill="#ddd"/><path d="M5 9A4 4 0 1 1 9 13" stroke="#555" stroke-width="1.8" fill="none"/></svg>
<svg style="left:1229px;top:869px;" width="20" height="20" viewBox="0 0 20 20"><rect x="5" y="3" width="14" height="10" fill="#eef" stroke="#333"/><path d="M12 13V17M8 17H16M1 1V10" stroke="#333" stroke-width="1.4"/><rect x="0" y="1" width="4" height="6" fill="#fff" stroke="#333"/></svg>
<svg style="left:1252px;top:869px;" width="18" height="20" viewBox="0 0 18 20"><path d="M9 1L17 4V10Q17 16 9 19Q1 16 1 10V4Z" fill="#3aa03a" stroke="#1a601a"/><path d="M10 4L6 11H9L8 16L12 9H9Z" fill="#fff"/></svg>
<svg style="left:1276px;top:871px;" width="20" height="16" viewBox="0 0 20 16"><path d="M1 5H5L10 1V15L5 11H1Z" fill="#e8eef4" stroke="#556"/><path d="M13 4Q16 8 13 12M15 2Q20 8 15 14" stroke="#556" fill="none"/></svg>
<svg style="left:1300px;top:869px;" width="20" height="20" viewBox="0 0 20 20"><circle cx="10" cy="10" r="9.5" fill="#e8d800" stroke="#8a8000"/><path d="M10 4V16M4 10H16" stroke="#2a7a1a" stroke-width="3.2"/></svg>
<svg style="left:1325px;top:868px;" width="20" height="21" viewBox="0 0 20 21"><path d="M2 1V20" stroke="#333" stroke-width="1.5"/><path d="M3 2H14V10H3Z" fill="#fff" stroke="#777"/><circle cx="14" cy="14" r="5.5" fill="#e02020"/><path d="M11.5 11.5L16.5 16.5M16.5 11.5L11.5 16.5" stroke="#fff" stroke-width="1.5"/></svg>
<div class="t" style="left:1372px;top:866px;font-size:13px;color:#f4f6f8;">15:42</div>
<div class="t" style="left:1358px;top:883px;font-size:13px;color:#f4f6f8;">2017/3/11</div>
<div class="a" style="left:1428px;top:861px;width:12px;height:39px;background:linear-gradient(90deg,#6f8196,#9aaec2);border-left:1px solid #5a6a7a"></div>
</body></html>
